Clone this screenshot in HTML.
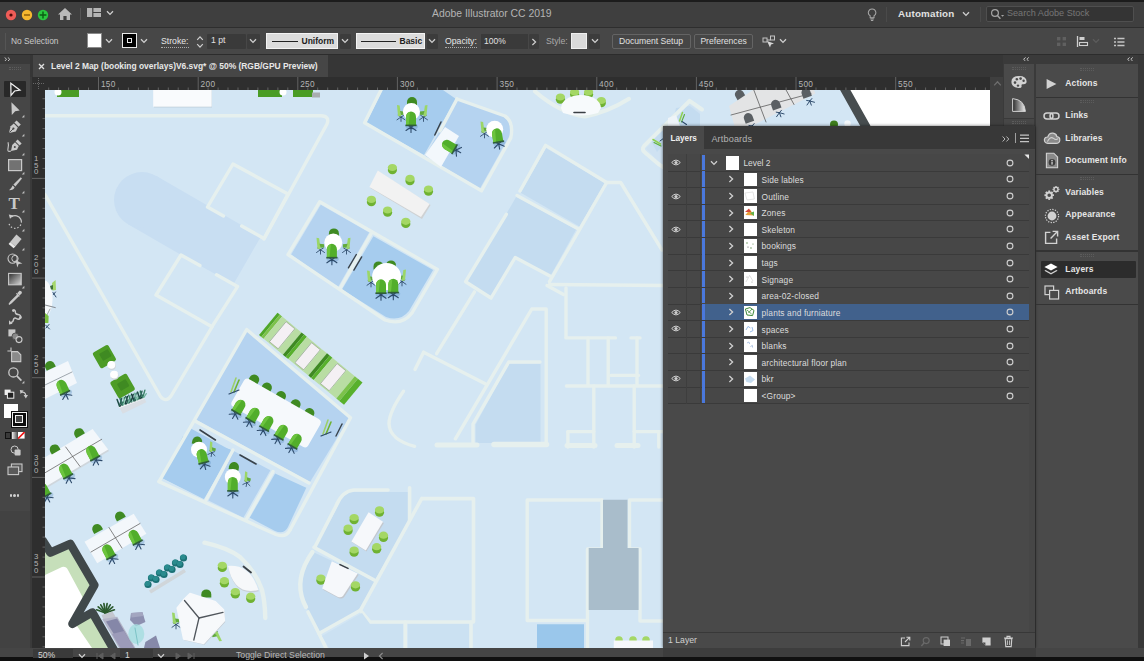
<!DOCTYPE html>
<html><head><meta charset="utf-8"><title>Adobe Illustrator CC 2019</title>
<style>
*{box-sizing:border-box;margin:0;padding:0}
html,body{width:1144px;height:661px;overflow:hidden;background:#3a3a3a;font-family:"Liberation Sans",sans-serif;font-size:8.5px;color:#dcdcdc;-webkit-font-smoothing:antialiased}
.abs{position:absolute}
#topline{left:0;top:0;width:1144px;height:2px;background:#1c1c1c}
#titlebar{left:0;top:2px;width:1144px;height:25px;background:#3f3f3f}
#ctrlbar{left:0;top:27px;width:1144px;height:28px;background:#474747;border-top:1px solid #2e2e2e;border-bottom:1px solid #2c2c2c}
#tabrow{left:0;top:55px;width:1144px;height:22px;background:#363636}
#tab{left:33px;top:55px;width:295px;height:22px;background:#464646}
#toolhdr{left:0;top:55px;width:30px;height:9px;background:#3a3a3a}
#tools{left:0;top:64px;width:30px;height:584px;background:linear-gradient(#464646 0,#464646 447px,#424242 447px)}
#hruler{left:32px;top:77px;width:958px;height:13px;background:#2e2e2e}
#vruler{left:32px;top:90px;width:13px;height:558px;background:#2e2e2e}
#canvas{left:45px;top:90px;width:945px;height:558px;background:#d4e7f4;overflow:hidden}
#vscroll{left:990px;top:77px;width:13px;height:571px;background:#3f3f3f}
#status{left:0;top:648px;width:1144px;height:9px;background:#454545}
#botline{left:0;top:657px;width:1144px;height:4px;background:#101010}
#dockbg{left:1003px;top:55px;width:141px;height:593px;background:#3a3a3a}
#iconcol{left:1004px;top:64px;width:30px;height:54px;background:#4a4a4a}
#iconcol2{left:1004px;top:119px;width:30px;height:529px;background:#474747}
#panelcol{left:1036px;top:64px;width:102px;height:593px;background:#4a4a4a}
#layers{left:663px;top:126px;width:372px;height:522px;background:#494949;box-shadow:0 0 3px rgba(0,0,0,.6)}
.t{position:absolute;white-space:nowrap;line-height:1}
</style></head><body>
<div class="abs" id="topline"></div>
<div class="abs" id="titlebar"></div>
<div class="abs" id="ctrlbar"></div>
<div class="abs" id="tabrow"></div>
<div class="abs" id="tab"></div>
<div class="abs" id="toolhdr"></div>
<div class="abs" id="tools"></div>
<div class="abs" id="hruler"></div>
<div class="abs" id="vruler"></div>
<div class="abs" id="canvas"><svg width="945" height="558" viewBox="45 90 945 558" style="position:absolute;left:0;top:0"><defs>
<g id="st"><ellipse cx="0" cy="1.6" rx="4.6" ry="4.2" fill="#6fb232"/><ellipse cx="0" cy="-1" rx="4.6" ry="3.6" fill="#a4d765"/></g>
<g id="legs" stroke="#2d4a6a" stroke-width="1.1" stroke-linecap="round"><path d="M0 0L0 5.5M0 0L-5 3.5M0 0L5 3.5M0 0L-3.5 -2M0 0L3.5 -2"/></g>
<g id="ch"><ellipse cx="0.8" cy="7.6" rx="6.2" ry="3.4" fill="#5f8fc4" opacity=".35"/><use href="#legs" transform="translate(0 8)"/><path d="M-5 6.5V-2A5 5.5 0 0 1 5 -2V6.5Z" fill="#52ae2b"/><path d="M-5 6.5V-2A5 5.5 0 0 1 -1 -7L-2.4 6.5Z" fill="#6cc43e"/><rect x="-5.6" y="5.6" width="11.2" height="1.6" fill="#2f5d3a"/></g>
<g id="dc"><path d="M-5 3V0A5 5 0 0 1 5 0V3Z" fill="#3f8a22"/></g>
<g id="sc"><use href="#legs" transform="translate(2 6) scale(.8)"/><path d="M-2 -6L0.6 -5.4L2.2 5.6L-1 5Z" fill="#9bd667"/><path d="M1 0L5.6 0.6L5.6 3.8L2 4Z" fill="#62ab3c"/></g>
<g id="gc"><path d="M-4.5 4V-1A4.5 4.5 0 0 1 4.5 -1V4Z" fill="#5a5f63"/></g></defs>
<rect x="45" y="90" width="945" height="558" fill="#d3e6f4"/>
<polygon points="156.0,175.8 261.0,236.4 233.0,284.9 128.0,224.2" fill="#c8def2" />
<circle cx="142.0" cy="200.0" r="28.0" fill="#c8def2" />
<polygon points="181.0,255.0 237.5,286.6 212.0,326.7 156.0,295.0" fill="#d3e6f4" />
<path d="M45 115.8H321Q330 116 327 124L264 239" fill="none" stroke="#e6f0ee" stroke-width="3.4" stroke-linecap="round" stroke-linejoin="round" />
<polyline points="241.7,226.0 264.0,238.5 288.0,194.0 233.0,164.0 207.5,207.0 223.5,216.0" fill="none" stroke="#e6f0ee" stroke-width="3.4" stroke-linejoin="round" stroke-linecap="round" />
<polygon points="223.5,216.0 207.5,207.0" fill="none" />
<polyline points="216.5,274.8 237.5,286.6 212.0,326.7 156.0,295.0 181.0,255.0 199.9,265.6" fill="none" stroke="#e6f0ee" stroke-width="3.4" stroke-linejoin="round" stroke-linecap="round" />
<path d="M45 194.5L160.5 396.5Q166 403 171 396L212 327" fill="none" stroke="#e6f0ee" stroke-width="3.4" stroke-linecap="round" stroke-linejoin="round" />
<rect x="154.0" y="89.4" width="58.0" height="18.0" rx="0.0" fill="#bccbd8" transform="rotate(0.0 183.0 98.4)" />
<rect x="153.2" y="88.1" width="58.5" height="18.6" rx="0.0" fill="#f9fbfd" transform="rotate(0.0 182.5 97.4)" />
<rect x="57.0" y="89.0" width="22.0" height="8.0" rx="0.0" fill="#4a9c25" transform="rotate(0.0 68.0 93.0)" />
<circle cx="58.0" cy="92.0" r="3.5" fill="#fff" />
<rect x="258.0" y="89.0" width="24.0" height="8.0" rx="0.0" fill="#4a9c25" transform="rotate(0.0 270.0 93.0)" />
<circle cx="283.0" cy="92.0" r="3.5" fill="#fff" />
<rect x="293.0" y="89.0" width="20.0" height="8.0" rx="0.0" fill="#4a9c25" transform="rotate(0.0 303.0 93.0)" />
<rect x="312.0" y="92.5" width="8.0" height="5.0" rx="0.0" fill="#a9adb0" transform="rotate(0.0 316.0 95.0)" />
<polygon points="383.4,88.0 366.6,122.8 424.0,155.0 456.0,99.0 440.0,88.0" fill="#a6ccee" />
<polygon points="458.0,100.0 503.0,116.0 510.0,123.0 510.0,135.0 480.0,188.6 425.0,156.0" fill="#b5d3f0" />
<path d="M382 88L364.6 122.8L481.5 190.8L510.8 138Q514 122 505 116L457 99" fill="none" stroke="#e6f0ee" stroke-width="3.4" stroke-linecap="round" stroke-linejoin="round" />
<polyline points="457.0,99.0 440.0,131.0" fill="none" stroke="#e6f0ee" stroke-width="3.4" stroke-linejoin="round" stroke-linecap="round" />
<polygon points="445.0,127.0 459.0,136.0 441.0,167.0 425.0,155.0" fill="#f3f8fc" />
<use href="#ch" transform="translate(449.0 146.0) rotate(-60.0) scale(1.00)"/>
<use href="#dc" transform="translate(412.0 102.0) rotate(0.0) scale(1.00)"/>
<use href="#sc" transform="translate(399.0 111.0) rotate(0.0) scale(1.00)"/>
<use href="#sc" transform="translate(425.5 111.0) rotate(0.0) scale(-1.00 1.00)"/>
<circle cx="411.4" cy="111.6" r="8.5" fill="#fff" />
<use href="#ch" transform="translate(411.0 119.0) rotate(0.0) scale(1.00)"/>
<use href="#sc" transform="translate(482.5 127.5) rotate(0.0) scale(1.00)"/>
<circle cx="494.7" cy="129.3" r="8.5" fill="#fff" />
<use href="#ch" transform="translate(497.3 135.8) rotate(-10.0) scale(1.00)"/>
<polyline points="441.0,122.0 434.8,135.0" fill="none" stroke="#39424a" stroke-width="1.5" stroke-linejoin="round" stroke-linecap="round" />
<use href="#st" transform="translate(392.4 168.5) rotate(0.0) scale(1.00)"/>
<use href="#st" transform="translate(410.0 179.4) rotate(0.0) scale(1.00)"/>
<use href="#st" transform="translate(428.5 190.0) rotate(0.0) scale(1.00)"/>
<polygon points="378.8,171.4 430.6,205.0 422.0,219.0 370.4,188.0" fill="#cfd2d4" />
<polygon points="377.8,170.4 429.6,204.0 421.0,217.0 369.4,187.0" fill="#f2f2f2" />
<use href="#st" transform="translate(371.4 200.4) rotate(0.0) scale(1.00)"/>
<use href="#st" transform="translate(387.6 211.0) rotate(0.0) scale(1.00)"/>
<use href="#st" transform="translate(405.8 222.3) rotate(0.0) scale(1.00)"/>
<polygon points="320.8,204.8 369.2,232.4 337.8,287.5 291.2,254.6" fill="#b5d3f0" />
<path d="M373.4 236.2L433.1 270.1L409 311Q400 322 386 317L342 289.6Z" fill="#a6ccee" stroke="none" stroke-width="3.4" stroke-linecap="round" stroke-linejoin="round" />
<path d="M288 254.6L319.8 201.7L437.4 269.4L412 313Q402 326 385 320L288 254.6" fill="none" stroke="#e6f0ee" stroke-width="3.4" stroke-linecap="round" stroke-linejoin="round" />
<polyline points="371.0,234.0 340.0,288.5" fill="none" stroke="#e6f0ee" stroke-width="3.4" stroke-linejoin="round" stroke-linecap="round" />
<polyline points="356.3,254.5 348.4,267.8" fill="none" stroke="#39424a" stroke-width="1.4" stroke-linejoin="round" stroke-linecap="round" />
<polyline points="361.7,256.9 353.9,270.2" fill="none" stroke="#39424a" stroke-width="1.4" stroke-linejoin="round" stroke-linecap="round" />
<use href="#dc" transform="translate(333.9 233.4) rotate(0.0) scale(1.00)"/>
<use href="#sc" transform="translate(318.5 243.7) rotate(0.0) scale(1.00)"/>
<use href="#sc" transform="translate(348.5 243.7) rotate(0.0) scale(-1.00 1.00)"/>
<circle cx="333.3" cy="242.6" r="9.0" fill="#fff" />
<use href="#ch" transform="translate(331.9 251.3) rotate(0.0) scale(1.00)"/>
<use href="#dc" transform="translate(378.5 266.4) rotate(0.0) scale(1.00)"/>
<use href="#dc" transform="translate(391.0 265.4) rotate(0.0) scale(1.00)"/>
<use href="#sc" transform="translate(369.0 276.5) rotate(0.0) scale(1.00)"/>
<use href="#sc" transform="translate(404.0 275.5) rotate(0.0) scale(-1.00 1.00)"/>
<ellipse cx="386.6" cy="276.6" rx="14.5" ry="13.5" fill="#fff" transform="rotate(0.0 386.6 276.6)" />
<use href="#ch" transform="translate(381.0 286.8) rotate(0.0) scale(1.00)"/>
<use href="#ch" transform="translate(393.3 286.2) rotate(0.0) scale(1.00)"/>
<polygon points="546.0,148.0 604.7,183.0 579.5,226.5 520.7,192.8" fill="#c4dcf0" />
<polygon points="516.4,196.5 576.2,229.6 550.8,275.3 515.2,257.5 491.0,297.0 466.9,281.7" fill="#c4dcf0" />
<polyline points="520.0,191.0 545.6,145.4 606.7,182.5 549.5,281.7" fill="none" stroke="#e6f0ee" stroke-width="3.4" stroke-linejoin="round" stroke-linecap="round" />
<polyline points="517.0,195.5 578.5,229.0" fill="none" stroke="#e6f0ee" stroke-width="3.4" stroke-linejoin="round" stroke-linecap="round" />
<polyline points="606.7,182.5 620.7,182.5 662.0,250.0" fill="none" stroke="#e6f0ee" stroke-width="3.4" stroke-linejoin="round" stroke-linecap="round" />
<polyline points="549.5,284.5 665.0,285.5" fill="none" stroke="#e6f0ee" stroke-width="3.4" stroke-linejoin="round" stroke-linecap="round" />
<polyline points="547.0,285.5 563.5,294.4" fill="none" stroke="#e6f0ee" stroke-width="3.4" stroke-linejoin="round" stroke-linecap="round" />
<polyline points="566.0,288.0 566.0,337.0" fill="none" stroke="#e6f0ee" stroke-width="3.4" stroke-linejoin="round" stroke-linecap="round" />
<polyline points="506.3,214.3 465.6,281.7 491.0,298.0 515.2,257.5 550.0,276.0" fill="none" stroke="#e6f0ee" stroke-width="3.4" stroke-linejoin="round" stroke-linecap="round" />
<polyline points="474.5,291.9 436.6,353.7" fill="none" stroke="#e6f0ee" stroke-width="3.4" stroke-linejoin="round" stroke-linecap="round" />
<polyline points="566.0,337.9 615.5,337.9" fill="none" stroke="#e6f0ee" stroke-width="3.4" stroke-linejoin="round" stroke-linecap="round" />
<polyline points="631.0,337.9 640.0,337.9" fill="none" stroke="#e6f0ee" stroke-width="3.4" stroke-linejoin="round" stroke-linecap="round" />
<polyline points="588.0,337.9 588.0,385.5" fill="none" stroke="#e6f0ee" stroke-width="3.4" stroke-linejoin="round" stroke-linecap="round" />
<polyline points="608.2,337.9 608.2,385.5" fill="none" stroke="#e6f0ee" stroke-width="3.4" stroke-linejoin="round" stroke-linecap="round" />
<polyline points="637.0,337.9 637.0,385.5" fill="none" stroke="#e6f0ee" stroke-width="3.4" stroke-linejoin="round" stroke-linecap="round" />
<polyline points="611.0,375.4 638.5,375.4" fill="none" stroke="#e6f0ee" stroke-width="3.4" stroke-linejoin="round" stroke-linecap="round" />
<polyline points="566.4,386.0 665.0,386.0" fill="none" stroke="#e6f0ee" stroke-width="3.4" stroke-linejoin="round" stroke-linecap="round" />
<polyline points="593.8,386.0 593.8,447.0" fill="none" stroke="#e6f0ee" stroke-width="3.4" stroke-linejoin="round" stroke-linecap="round" />
<polyline points="634.2,386.0 634.2,447.0" fill="none" stroke="#e6f0ee" stroke-width="3.4" stroke-linejoin="round" stroke-linecap="round" />
<polyline points="567.9,431.6 593.8,431.6" fill="none" stroke="#e6f0ee" stroke-width="3.4" stroke-linejoin="round" stroke-linecap="round" />
<polyline points="634.2,431.6 665.0,431.6" fill="none" stroke="#e6f0ee" stroke-width="3.4" stroke-linejoin="round" stroke-linecap="round" />
<polyline points="567.9,431.6 567.9,447.0" fill="none" stroke="#e6f0ee" stroke-width="3.4" stroke-linejoin="round" stroke-linecap="round" />
<polygon points="508.7,363.8 540.5,363.8 540.5,443.0 475.6,443.0 475.6,424.4" fill="#c4dcf0" />
<polyline points="455.4,438.8 531.8,309.0 546.2,309.0 546.2,445.0" fill="none" stroke="#e6f0ee" stroke-width="3.4" stroke-linejoin="round" stroke-linecap="round" />
<polyline points="540.0,362.0 508.7,362.0 473.0,424.0 473.0,443.0" fill="none" stroke="#e6f0ee" stroke-width="3.4" stroke-linejoin="round" stroke-linecap="round" />
<polyline points="494.0,444.5 546.5,444.5" fill="none" stroke="#e6f0ee" stroke-width="5.5" stroke-linejoin="round" stroke-linecap="round" />
<polyline points="437.0,445.0 477.0,445.0" fill="none" stroke="#e6f0ee" stroke-width="5.0" stroke-linejoin="round" stroke-linecap="round" />
<polyline points="567.0,445.5 595.0,445.5" fill="none" stroke="#e6f0ee" stroke-width="5.0" stroke-linejoin="round" stroke-linecap="round" />
<polyline points="617.0,445.5 638.0,445.5" fill="none" stroke="#e6f0ee" stroke-width="5.0" stroke-linejoin="round" stroke-linecap="round" />
<polyline points="658.8,431.6 658.8,447.0" fill="none" stroke="#e6f0ee" stroke-width="3.4" stroke-linejoin="round" stroke-linecap="round" />
<polyline points="423.6,352.3 485.7,384.0" fill="none" stroke="#e6f0ee" stroke-width="3.4" stroke-linejoin="round" stroke-linecap="round" />
<polyline points="423.6,352.3 415.0,369.6" fill="none" stroke="#e6f0ee" stroke-width="3.4" stroke-linejoin="round" stroke-linecap="round" />
<path d="M403.5 391.2Q389 412 389 424Q390 440 414.6 446.3" fill="none" stroke="#e6f0ee" stroke-width="3.4" stroke-linecap="round" stroke-linejoin="round" />
<path d="M535 91.4Q560 113 585 116.5Q608 112 629 98.8" fill="none" stroke="#e6f0ee" stroke-width="4.0" stroke-linecap="round" stroke-linejoin="round" />
<use href="#st" transform="translate(560.4 98.0) rotate(0.0) scale(1.00)"/>
<use href="#st" transform="translate(574.6 93.0) rotate(0.0) scale(1.00)"/>
<use href="#st" transform="translate(588.6 93.0) rotate(0.0) scale(1.00)"/>
<use href="#st" transform="translate(601.3 101.5) rotate(0.0) scale(1.00)"/>
<path d="M561 108A20 13 0 0 1 601 108L598 113Q580 118 563 113Z" fill="#f7fafc" stroke="none" stroke-width="3.4" stroke-linecap="round" stroke-linejoin="round" />
<polyline points="574.0,112.5 585.0,112.5" fill="none" stroke="#3a3f44" stroke-width="1.6" stroke-linejoin="round" stroke-linecap="round" />
<polygon points="689.6,104.0 646.0,148.5 659.0,162.0 700.0,192.0 700.0,112.0" fill="#cfe2f2" />
<polygon points="676.0,108.0 690.0,106.0 700.0,114.0 700.0,126.0 672.0,126.0" fill="#c4dcf0" />
<polygon points="650.0,139.0 662.0,130.0 668.0,140.0 657.0,152.0" fill="#c4dcf0" />
<path d="M702 109.5L689.6 100.9L644.5 145.5Q641 149.5 645 152.5L659 164.4L700 192" fill="none" stroke="#e6f0ee" stroke-width="4.0" stroke-linecap="round" stroke-linejoin="round" />
<polygon points="668.0,118.0 676.0,115.0 680.0,126.0 668.0,126.0" fill="#eef4f8" />
<polyline points="679.5,121.0 682.5,112.5" fill="none" stroke="#8fd14f" stroke-width="1.5" stroke-linejoin="round" stroke-linecap="round" />
<polyline points="681.5,122.0 684.5,114.5" fill="none" stroke="#5cae3c" stroke-width="1.1" stroke-linejoin="round" stroke-linecap="round" />
<polyline points="682.0,121.5 686.5,124.5" fill="none" stroke="#2d4a6a" stroke-width="1.1" stroke-linejoin="round" stroke-linecap="round" />
<polyline points="653.0,139.5 660.5,144.0" fill="none" stroke="#8fd14f" stroke-width="1.5" stroke-linejoin="round" stroke-linecap="round" />
<polyline points="654.0,142.5 661.0,146.0" fill="none" stroke="#5cae3c" stroke-width="1.1" stroke-linejoin="round" stroke-linecap="round" />
<polyline points="660.0,141.0 664.0,138.0" fill="none" stroke="#2d4a6a" stroke-width="1.0" stroke-linejoin="round" stroke-linecap="round" />
<polygon points="845.0,88.0 992.0,88.0 992.0,128.0 868.0,128.0" fill="#ffffff" />
<use href="#gc" transform="translate(739.9 95.2) rotate(-30.0) scale(1.00)"/>
<polygon points="729.0,106.0 756.0,88.0 813.0,88.0 815.5,93.5 748.0,128.0 735.0,128.0" fill="#e3e4e5" />
<polyline points="753.8,90.0 766.0,122.0" fill="none" stroke="#4a4a4a" stroke-width="0.7" stroke-linejoin="round" stroke-linecap="round" />
<polyline points="785.0,88.0 794.0,104.5" fill="none" stroke="#4a4a4a" stroke-width="0.7" stroke-linejoin="round" stroke-linecap="round" />
<polyline points="731.0,115.0 811.0,93.5" fill="none" stroke="#4a4a4a" stroke-width="0.7" stroke-linejoin="round" stroke-linecap="round" />
<use href="#legs" transform="translate(779.4 112.7) rotate(-20.0) scale(0.80)"/>
<use href="#gc" transform="translate(775.9 105.2) rotate(-20.0) scale(1.00)"/>
<use href="#legs" transform="translate(752.1 126.0) rotate(-20.0) scale(0.80)"/>
<use href="#gc" transform="translate(748.6 118.5) rotate(-20.0) scale(1.00)"/>
<use href="#legs" transform="translate(809.8 101.0) rotate(-20.0) scale(0.80)"/>
<use href="#gc" transform="translate(806.3 93.5) rotate(-20.0) scale(1.00)"/>
<circle cx="847.5" cy="123.5" r="3.2" fill="#f4f8fa" />
<polyline points="843.0,86.0 866.0,127.0" fill="none" stroke="#474d4f" stroke-width="9.0" stroke-linejoin="round" stroke-linecap="round" />
<circle cx="834.0" cy="124.5" r="4.0" fill="#3f7d1d" />
<polygon points="277.5,312.7 279.8,314.6 261.3,336.9 259.0,335.0" fill="#4fa728" />
<polygon points="279.8,314.6 282.1,316.5 263.6,338.8 261.3,336.9" fill="#7cc24a" />
<polygon points="282.1,316.5 286.8,320.3 268.3,342.6 263.6,338.8" fill="#b9dda3" />
<polygon points="286.8,320.3 296.0,327.9 277.5,350.3 268.3,342.6" fill="#b9dda3" />
<polygon points="286.1,321.7 294.8,328.8 278.2,348.8 269.5,341.7" fill="#f4f0f4" stroke="#7d8a78" stroke-width=".5" stroke-linejoin="round"/>
<polygon points="296.0,327.9 301.5,332.4 282.9,354.7 277.5,350.3" fill="#b9dda3" />
<polygon points="301.5,332.4 304.2,334.6 285.6,356.9 282.9,354.7" fill="#3f8a22" />
<polygon points="304.2,334.6 306.9,336.8 288.3,359.1 285.6,356.9" fill="#58b02c" />
<polygon points="306.9,336.8 312.3,341.3 293.8,363.6 288.3,359.1" fill="#b9dda3" />
<polygon points="312.3,341.3 321.5,348.9 303.0,371.2 293.8,363.6" fill="#b9dda3" />
<polygon points="311.6,342.7 320.3,349.8 303.7,369.8 295.0,362.7" fill="#f4f0f4" stroke="#7d8a78" stroke-width=".5" stroke-linejoin="round"/>
<polygon points="321.5,348.9 327.0,353.3 308.4,375.6 303.0,371.2" fill="#b9dda3" />
<polygon points="327.0,353.3 329.7,355.5 311.1,377.9 308.4,375.6" fill="#3f8a22" />
<polygon points="329.7,355.5 332.4,357.8 313.8,380.1 311.1,377.9" fill="#58b02c" />
<polygon points="332.4,357.8 337.8,362.2 319.3,384.5 313.8,380.1" fill="#b9dda3" />
<polygon points="337.8,362.2 347.0,369.8 328.5,392.1 319.3,384.5" fill="#b9dda3" />
<polygon points="337.1,363.6 345.8,370.7 329.2,390.7 320.5,383.6" fill="#f4f0f4" stroke="#7d8a78" stroke-width=".5" stroke-linejoin="round"/>
<polygon points="347.0,369.8 354.8,376.2 336.3,398.5 328.5,392.1" fill="#b9dda3" />
<polygon points="354.8,376.2 357.9,378.7 339.3,401.0 336.3,398.5" fill="#7cc24a" />
<polygon points="357.9,378.7 362.5,382.5 344.0,404.8 339.3,401.0" fill="#58b02c" />
<polygon points="246.7,329.7 349.5,417.6 310.0,482.0 195.0,419.0" fill="#b5d3f0" />
<polygon points="183.0,436.0 230.7,449.5 203.6,498.8 162.3,478.0" fill="#a6ccee" />
<polygon points="190.0,428.0 232.0,451.0 204.0,499.0 162.3,478.0" fill="#a6ccee" />
<polygon points="233.8,451.0 270.4,470.2 243.4,517.8 208.4,500.4" fill="#b5d3f0" />
<path d="M275.1 473.4L306.3 487.7L288 527Q284 535 275 531L249.7 517.8Z" fill="#a6ccee" stroke="none" stroke-width="3.4" stroke-linecap="round" stroke-linejoin="round" />
<polyline points="159.0,481.6 246.7,329.5 350.5,417.8 290.0,530.0" fill="none" stroke="#e6f0ee" stroke-width="3.4" stroke-linejoin="round" stroke-linecap="round" />
<path d="M159 481.6L276 534.5Q286 538 290 530" fill="none" stroke="#e6f0ee" stroke-width="3.4" stroke-linecap="round" stroke-linejoin="round" />
<polyline points="195.0,421.0 309.0,483.0" fill="none" stroke="#e6f0ee" stroke-width="3.4" stroke-linejoin="round" stroke-linecap="round" />
<polyline points="233.0,450.0 206.0,500.0" fill="none" stroke="#e6f0ee" stroke-width="3.4" stroke-linejoin="round" stroke-linecap="round" />
<polyline points="273.0,471.5 246.5,519.0" fill="none" stroke="#e6f0ee" stroke-width="3.4" stroke-linejoin="round" stroke-linecap="round" />
<use href="#dc" transform="translate(254.2 379.6) rotate(30.0) scale(1.00)"/>
<use href="#dc" transform="translate(266.9 387.6) rotate(30.0) scale(1.00)"/>
<use href="#dc" transform="translate(281.0 396.0) rotate(30.0) scale(1.00)"/>
<use href="#dc" transform="translate(295.6 404.3) rotate(30.0) scale(1.00)"/>
<use href="#dc" transform="translate(309.4 413.1) rotate(30.0) scale(1.00)"/>
<rect x="232.1" y="397.0" width="88.0" height="32.0" rx="4.0" fill="#f6f9fc" transform="rotate(29.7 276.1 413.0)" />
<use href="#ch" transform="translate(239.3 406.8) rotate(30.0) scale(1.00)"/>
<use href="#ch" transform="translate(253.5 414.8) rotate(30.0) scale(1.00)"/>
<use href="#ch" transform="translate(267.3 423.1) rotate(30.0) scale(1.00)"/>
<use href="#ch" transform="translate(281.8 431.9) rotate(30.0) scale(1.00)"/>
<use href="#ch" transform="translate(295.6 440.9) rotate(30.0) scale(1.00)"/>
<polyline points="231.0,392.0 236.0,378.0" fill="none" stroke="#9ccf6a" stroke-width="1.6" stroke-linejoin="round" stroke-linecap="round" />
<polyline points="234.0,392.0 239.0,380.0" fill="none" stroke="#6fb232" stroke-width="1.6" stroke-linejoin="round" stroke-linecap="round" />
<polyline points="229.0,394.0 239.0,390.0" fill="none" stroke="#2d4a6a" stroke-width="1.2" stroke-linejoin="round" stroke-linecap="round" />
<polyline points="323.0,434.0 328.0,420.0" fill="none" stroke="#9ccf6a" stroke-width="1.6" stroke-linejoin="round" stroke-linecap="round" />
<polyline points="326.0,434.0 331.0,422.0" fill="none" stroke="#6fb232" stroke-width="1.6" stroke-linejoin="round" stroke-linecap="round" />
<polyline points="321.0,436.0 331.0,432.0" fill="none" stroke="#2d4a6a" stroke-width="1.2" stroke-linejoin="round" stroke-linecap="round" />
<polyline points="336.0,436.0 342.0,424.0" fill="none" stroke="#39424a" stroke-width="1.4" stroke-linejoin="round" stroke-linecap="round" />
<polyline points="200.0,430.0 215.4,440.0" fill="none" stroke="#39424a" stroke-width="1.6" stroke-linejoin="round" stroke-linecap="round" />
<polyline points="240.0,455.0 256.0,464.0" fill="none" stroke="#39424a" stroke-width="1.6" stroke-linejoin="round" stroke-linecap="round" />
<use href="#dc" transform="translate(197.2 441.5) rotate(10.0) scale(1.00)"/>
<use href="#sc" transform="translate(211.0 447.0) rotate(10.0) scale(0.90)"/>
<circle cx="199.0" cy="449.7" r="8.0" fill="#fff" />
<use href="#ch" transform="translate(202.2 456.5) rotate(-15.0) scale(1.00)"/>
<use href="#dc" transform="translate(234.0 467.0) rotate(10.0) scale(1.00)"/>
<use href="#sc" transform="translate(246.0 477.0) rotate(10.0) scale(0.90)"/>
<circle cx="232.8" cy="477.0" r="8.0" fill="#fff" />
<use href="#ch" transform="translate(232.8 484.5) rotate(0.0) scale(1.00)"/>
<rect x="95.4" y="347.6" width="18.0" height="18.0" rx="2.0" fill="#4d9c26" transform="rotate(-30.0 104.4 356.6)" />
<rect x="100.4" y="351.0" width="10.0" height="8.0" rx="1.0" fill="#3f8a22" transform="rotate(-30.0 105.4 355.0)" />
<circle cx="111.4" cy="365.0" r="4.0" fill="#fff" />
<circle cx="114.2" cy="374.8" r="4.0" fill="#fff" />
<rect x="113.1" y="376.5" width="19.0" height="19.0" rx="2.0" fill="#4d9c26" transform="rotate(-30.0 122.6 386.0)" />
<rect x="118.2" y="381.0" width="10.0" height="8.0" rx="1.0" fill="#3f8a22" transform="rotate(-30.0 123.2 385.0)" />
<polygon points="118.5,406.0 143.9,396.9 146.3,402.3 122.7,413.8" fill="#d9dee4" />
<polygon points="118.5,406.0 143.9,396.9 144.7,398.7 119.4,407.9" fill="#f1f3f6" />
<polyline points="119.5,406.0 117.1,399.5" fill="none" stroke="#1d4a45" stroke-width="1.5" stroke-linejoin="round" stroke-linecap="round" />
<polyline points="119.5,406.0 121.7,398.5" fill="none" stroke="#255c4c" stroke-width="1.4" stroke-linejoin="round" stroke-linecap="round" />
<polyline points="120.5,406.0 123.1,402.0" fill="none" stroke="#173c3a" stroke-width="1.2" stroke-linejoin="round" stroke-linecap="round" />
<polyline points="122.4,404.9 120.0,398.4" fill="none" stroke="#2f6f5f" stroke-width="1.5" stroke-linejoin="round" stroke-linecap="round" />
<polyline points="122.4,404.9 124.6,397.4" fill="none" stroke="#3b8268" stroke-width="1.4" stroke-linejoin="round" stroke-linecap="round" />
<polyline points="123.4,404.9 126.0,400.9" fill="none" stroke="#6fb39c" stroke-width="1.2" stroke-linejoin="round" stroke-linecap="round" />
<polyline points="125.3,403.9 122.9,397.4" fill="none" stroke="#8fc9b4" stroke-width="1.5" stroke-linejoin="round" stroke-linecap="round" />
<polyline points="125.3,403.9 127.5,396.4" fill="none" stroke="#173c3a" stroke-width="1.4" stroke-linejoin="round" stroke-linecap="round" />
<polyline points="126.3,403.9 128.9,399.9" fill="none" stroke="#1d4a45" stroke-width="1.2" stroke-linejoin="round" stroke-linecap="round" />
<polyline points="128.2,402.9 125.8,396.4" fill="none" stroke="#255c4c" stroke-width="1.5" stroke-linejoin="round" stroke-linecap="round" />
<polyline points="128.2,402.9 130.4,395.4" fill="none" stroke="#6fb39c" stroke-width="1.4" stroke-linejoin="round" stroke-linecap="round" />
<polyline points="129.2,402.9 131.8,398.9" fill="none" stroke="#2f6f5f" stroke-width="1.2" stroke-linejoin="round" stroke-linecap="round" />
<polyline points="131.1,401.8 128.7,395.3" fill="none" stroke="#3b8268" stroke-width="1.5" stroke-linejoin="round" stroke-linecap="round" />
<polyline points="131.1,401.8 133.3,394.3" fill="none" stroke="#1d4a45" stroke-width="1.4" stroke-linejoin="round" stroke-linecap="round" />
<polyline points="132.1,401.8 134.7,397.8" fill="none" stroke="#8fc9b4" stroke-width="1.2" stroke-linejoin="round" stroke-linecap="round" />
<polyline points="134.0,400.8 131.6,394.2" fill="none" stroke="#173c3a" stroke-width="1.5" stroke-linejoin="round" stroke-linecap="round" />
<polyline points="134.0,400.8 136.2,393.2" fill="none" stroke="#2f6f5f" stroke-width="1.4" stroke-linejoin="round" stroke-linecap="round" />
<polyline points="135.0,400.8 137.6,396.8" fill="none" stroke="#255c4c" stroke-width="1.2" stroke-linejoin="round" stroke-linecap="round" />
<polyline points="136.9,399.7 134.5,393.2" fill="none" stroke="#6fb39c" stroke-width="1.5" stroke-linejoin="round" stroke-linecap="round" />
<polyline points="136.9,399.7 139.1,392.2" fill="none" stroke="#8fc9b4" stroke-width="1.4" stroke-linejoin="round" stroke-linecap="round" />
<polyline points="137.9,399.7 140.5,395.7" fill="none" stroke="#3b8268" stroke-width="1.2" stroke-linejoin="round" stroke-linecap="round" />
<polyline points="139.8,398.6 137.4,392.1" fill="none" stroke="#1d4a45" stroke-width="1.5" stroke-linejoin="round" stroke-linecap="round" />
<polyline points="139.8,398.6 142.0,391.1" fill="none" stroke="#255c4c" stroke-width="1.4" stroke-linejoin="round" stroke-linecap="round" />
<polyline points="140.8,398.6 143.4,394.6" fill="none" stroke="#173c3a" stroke-width="1.2" stroke-linejoin="round" stroke-linecap="round" />
<polyline points="142.7,397.6 140.3,391.1" fill="none" stroke="#2f6f5f" stroke-width="1.5" stroke-linejoin="round" stroke-linecap="round" />
<polyline points="142.7,397.6 144.9,390.1" fill="none" stroke="#3b8268" stroke-width="1.4" stroke-linejoin="round" stroke-linecap="round" />
<polyline points="143.7,397.6 146.3,393.6" fill="none" stroke="#6fb39c" stroke-width="1.2" stroke-linejoin="round" stroke-linecap="round" />
<circle cx="111.9" cy="366.0" r="3.9" fill="#cfd5da" />
<circle cx="114.7" cy="375.8" r="3.9" fill="#cfd5da" />
<circle cx="111.4" cy="365.0" r="3.8" fill="#fff" />
<circle cx="114.2" cy="374.8" r="3.8" fill="#fff" />
<polygon points="45.0,372.0 68.0,361.0 77.0,383.0 45.0,399.0" fill="#f3f7fb" />
<polyline points="45.0,385.0 72.0,372.0" fill="none" stroke="#7a848c" stroke-width="0.7" stroke-linejoin="round" stroke-linecap="round" />
<use href="#dc" transform="translate(50.0 366.0) rotate(-25.0) scale(1.00)"/>
<use href="#ch" transform="translate(62.4 387.0) rotate(-25.0) scale(1.00)"/>
<ellipse cx="44.0" cy="299.0" rx="8.6" ry="18.5" fill="#f6f9fb" transform="rotate(0.0 44.0 299.0)" />
<polyline points="45.0,305.0 55.3,307.6" fill="none" stroke="#7a7f85" stroke-width="0.9" stroke-linejoin="round" stroke-linecap="round" />
<polyline points="50.0,309.0 47.0,315.0" fill="none" stroke="#8a8f95" stroke-width="0.8" stroke-linejoin="round" stroke-linecap="round" />
<polygon points="52.0,283.0 55.6,280.0 56.0,290.0 52.5,290.5" fill="#a5d76b" />
<polygon points="50.0,286.0 53.0,285.0 53.0,289.5 51.0,289.5" fill="#3f6f3a" />
<polyline points="53.0,292.5 56.0,297.0" fill="none" stroke="#2d4a6a" stroke-width="1.0" stroke-linejoin="round" stroke-linecap="round" />
<polyline points="55.5,292.0 53.5,294.5" fill="none" stroke="#2d4a6a" stroke-width="1.0" stroke-linejoin="round" stroke-linecap="round" />
<polygon points="45.0,313.0 48.6,316.0 48.4,323.0 45.0,323.0" fill="#7cc040" />
<polyline points="45.5,325.0 49.5,329.0" fill="none" stroke="#2d4a6a" stroke-width="1.0" stroke-linejoin="round" stroke-linecap="round" />
<polyline points="49.0,324.5 46.0,328.0" fill="none" stroke="#2d4a6a" stroke-width="1.0" stroke-linejoin="round" stroke-linecap="round" />
<polygon points="45.0,459.0 93.4,430.5 109.0,451.0 45.0,489.0" fill="#cfd6dc" />
<polygon points="45.0,457.3 92.7,429.0 108.2,449.6 45.0,487.0" fill="#f3f7fb" />
<polyline points="45.0,472.8 101.7,439.3" fill="none" stroke="#555" stroke-width="0.7" stroke-linejoin="round" stroke-linecap="round" />
<polyline points="65.7,447.0 79.9,466.3" fill="none" stroke="#555" stroke-width="0.7" stroke-linejoin="round" stroke-linecap="round" />
<use href="#dc" transform="translate(79.1 433.2) rotate(-30.0) scale(1.00)"/>
<use href="#dc" transform="translate(54.7 449.4) rotate(-30.0) scale(1.00)"/>
<use href="#ch" transform="translate(92.2 452.8) rotate(-28.0) scale(1.00)"/>
<use href="#ch" transform="translate(65.2 470.8) rotate(-28.0) scale(1.00)"/>
<use href="#ch" transform="translate(43.4 490.0) rotate(-28.0) scale(1.00)"/>
<polygon points="84.5,541.7 133.7,513.7 146.4,533.7 97.2,563.3" fill="#f3f7fb" />
<polyline points="91.0,552.0 140.0,523.5" fill="none" stroke="#555" stroke-width="0.7" stroke-linejoin="round" stroke-linecap="round" />
<polyline points="109.0,527.5 122.0,548.0" fill="none" stroke="#555" stroke-width="0.7" stroke-linejoin="round" stroke-linecap="round" />
<use href="#dc" transform="translate(97.2 529.0) rotate(-28.0) scale(1.00)"/>
<use href="#dc" transform="translate(120.0 516.5) rotate(-28.0) scale(1.00)"/>
<use href="#ch" transform="translate(134.7 537.0) rotate(-28.0) scale(1.00)"/>
<use href="#ch" transform="translate(108.3 551.5) rotate(-28.0) scale(1.00)"/>
<polygon points="45.0,548.0 52.0,556.0 70.0,548.0 90.0,585.0 70.0,622.0 90.0,614.0 110.0,648.0 45.0,648.0" fill="#c6dfba" />
<path d="M45 575L62 567Q66 566 68 570L82 596Q84 600 82 604L75 618Q74 622 77 626L92 648H45Z" fill="#ffffff" stroke="none" stroke-width="3.4" stroke-linecap="round" stroke-linejoin="round" />
<polyline points="43.0,541.0 50.3,552.6 70.3,543.8 94.4,585.1 72.4,623.9 92.3,612.4 114.0,650.0" fill="none" stroke="#40484a" stroke-width="8.4" stroke-linejoin="round" stroke-linecap="round" />
<polygon points="149.0,590.5 184.0,569.0 186.0,572.0 151.0,593.5" fill="#d0d6da" />
<circle cx="148.0" cy="584.5" r="3.6" fill="#1c7175" />
<circle cx="147.5" cy="583.5" r="2.6" fill="#2a8b8e" />
<circle cx="151.5" cy="578.0" r="3.6" fill="#1c7175" />
<circle cx="151.0" cy="577.0" r="2.6" fill="#2a8b8e" />
<circle cx="156.0" cy="579.5" r="3.6" fill="#1c7175" />
<circle cx="155.5" cy="578.5" r="2.6" fill="#2a8b8e" />
<circle cx="159.5" cy="573.0" r="3.6" fill="#1c7175" />
<circle cx="159.0" cy="572.0" r="2.6" fill="#2a8b8e" />
<circle cx="164.0" cy="574.5" r="3.6" fill="#1c7175" />
<circle cx="163.5" cy="573.5" r="2.6" fill="#2a8b8e" />
<circle cx="167.5" cy="568.0" r="3.6" fill="#1c7175" />
<circle cx="167.0" cy="567.0" r="2.6" fill="#2a8b8e" />
<circle cx="172.0" cy="569.5" r="3.6" fill="#1c7175" />
<circle cx="171.5" cy="568.5" r="2.6" fill="#2a8b8e" />
<circle cx="175.5" cy="563.0" r="3.6" fill="#1c7175" />
<circle cx="175.0" cy="562.0" r="2.6" fill="#2a8b8e" />
<circle cx="180.0" cy="564.5" r="3.6" fill="#1c7175" />
<circle cx="179.5" cy="563.5" r="2.6" fill="#2a8b8e" />
<circle cx="183.5" cy="558.0" r="3.6" fill="#1c7175" />
<circle cx="183.0" cy="557.0" r="2.6" fill="#2a8b8e" />
<polyline points="105.5,613.0 96.6,609.8" fill="none" stroke="#2c5a2e" stroke-width="1.7" stroke-linejoin="round" stroke-linecap="round" />
<polyline points="105.5,613.0 98.2,606.9" fill="none" stroke="#2c5a2e" stroke-width="1.7" stroke-linejoin="round" stroke-linecap="round" />
<polyline points="105.5,613.0 100.8,604.8" fill="none" stroke="#2c5a2e" stroke-width="1.7" stroke-linejoin="round" stroke-linecap="round" />
<polyline points="105.5,613.0 103.9,603.6" fill="none" stroke="#2c5a2e" stroke-width="1.7" stroke-linejoin="round" stroke-linecap="round" />
<polyline points="105.5,613.0 107.1,603.6" fill="none" stroke="#2c5a2e" stroke-width="1.7" stroke-linejoin="round" stroke-linecap="round" />
<polyline points="105.5,613.0 110.2,604.8" fill="none" stroke="#2c5a2e" stroke-width="1.7" stroke-linejoin="round" stroke-linecap="round" />
<polyline points="105.5,613.0 112.8,606.9" fill="none" stroke="#2c5a2e" stroke-width="1.7" stroke-linejoin="round" stroke-linecap="round" />
<polyline points="105.5,613.0 114.4,609.8" fill="none" stroke="#2c5a2e" stroke-width="1.7" stroke-linejoin="round" stroke-linecap="round" />
<polygon points="101.5,615.0 112.5,611.5 116.0,617.5 104.0,621.0" fill="#c4c7cf" />
<polygon points="102.3,619.0 117.2,616.8 135.4,648.0 119.0,648.0" fill="#b3b5c7" />
<polygon points="106.0,621.5 117.0,618.5 134.0,648.0 122.5,648.0" fill="#8587a8" />
<polygon points="112.0,634.0 124.0,631.0 134.0,648.0 120.5,648.0" fill="#9c9bb9" />
<polygon points="131.0,613.0 142.5,612.2 145.4,622.0 136.0,626.3 130.0,620.0" fill="#8d90b0" />
<polygon points="131.0,613.0 142.5,612.2 143.4,616.0 131.5,617.5" fill="#a3a6c0" />
<ellipse cx="136.3" cy="634.0" rx="8.0" ry="10.0" fill="#a4dcde" transform="rotate(0.0 136.3 634.0)" opacity=".78"/>
<polyline points="135.0,628.0 138.0,645.0" fill="none" stroke="#7cc3c6" stroke-width="1.0" stroke-linejoin="round" stroke-linecap="round" />
<polygon points="145.4,642.0 156.0,635.4 160.0,648.0 144.0,648.0" fill="#8689a9" />
<use href="#dc" transform="translate(206.3 594.4) rotate(0.0) scale(1.00)"/>
<use href="#sc" transform="translate(174.0 618.5) rotate(0.0) scale(1.00)"/>
<use href="#sc" transform="translate(218.0 636.0) rotate(160.0) scale(1.00)"/>
<path d="M183.6 599.9L190 593.5L215.4 601.7L223.5 609.9L224.4 620.7L203.6 643.4L183.6 638.9L177.2 608Z" fill="#c5ccd3" stroke="none" stroke-width="3.4" stroke-linecap="round" stroke-linejoin="round" transform="translate(0.8 1.4)"/>
<path d="M183.6 599.9L190 593.5L215.4 601.7L223.5 609.9L224.4 620.7L203.6 643.4L183.6 638.9L177.2 608Z" fill="#f7f9fb" stroke="#f7f9fb" stroke-width="1.5" stroke-linecap="round" stroke-linejoin="round" />
<polyline points="199.0,618.0 184.5,600.5" fill="none" stroke="#50565c" stroke-width="1.3" stroke-linejoin="round" stroke-linecap="round" />
<polyline points="199.0,618.0 223.0,612.4" fill="none" stroke="#50565c" stroke-width="1.3" stroke-linejoin="round" stroke-linecap="round" />
<polyline points="199.0,618.0 193.8,640.0" fill="none" stroke="#50565c" stroke-width="1.3" stroke-linejoin="round" stroke-linecap="round" />
<path d="M204.5 542.7Q228 548 240 557Q256 572 262 590Q265 602 265.3 618" fill="none" stroke="#e6f0ee" stroke-width="4.4" stroke-linecap="round" stroke-linejoin="round" />
<use href="#st" transform="translate(222.3 566.3) rotate(0.0) scale(1.00)"/>
<use href="#st" transform="translate(224.4 581.7) rotate(0.0) scale(1.00)"/>
<use href="#st" transform="translate(235.3 592.6) rotate(0.0) scale(1.00)"/>
<use href="#st" transform="translate(250.7 597.2) rotate(0.0) scale(1.00)"/>
<path d="M228 566Q250 564 258.5 590Q234 596 228 566Z" fill="#c9cfd6" stroke="none" stroke-width="3.4" stroke-linecap="round" stroke-linejoin="round" transform="translate(0.3 1.3)"/>
<path d="M228 566Q250 564 258.5 590Q234 596 228 566Z" fill="#f6f8fa" stroke="none" stroke-width="3.4" stroke-linecap="round" stroke-linejoin="round" />
<polyline points="243.5,566.5 251.0,572.5" fill="none" stroke="#3a3f44" stroke-width="1.8" stroke-linejoin="round" stroke-linecap="round" />
<path d="M348 492H409.4V521.8L375.4 579L315.4 547.7L337 508Q342 494 348 492Z" fill="#c4dcf0" stroke="none" stroke-width="3.4" stroke-linecap="round" stroke-linejoin="round" />
<path d="M313 552L375 581L360.4 609L318 633L305 604Q295 580 313 552Z" fill="#c4dcf0" stroke="none" stroke-width="3.4" stroke-linecap="round" stroke-linejoin="round" />
<path d="M388 490H354Q342 491 336 506L315.4 546" fill="none" stroke="#e6f0ee" stroke-width="3.6" stroke-linecap="round" stroke-linejoin="round" />
<polyline points="409.6,487.7 409.6,520.0" fill="none" stroke="#e6f0ee" stroke-width="3.6" stroke-linejoin="round" stroke-linecap="round" />
<polyline points="314.0,547.4 376.0,581.0" fill="none" stroke="#e6f0ee" stroke-width="3.6" stroke-linejoin="round" stroke-linecap="round" />
<path d="M312.5 552Q294 578 303.5 602L306 607" fill="none" stroke="#e6f0ee" stroke-width="4.4" stroke-linecap="round" stroke-linejoin="round" />
<polyline points="308.0,612.0 319.0,633.5 360.4,610.3" fill="none" stroke="#e6f0ee" stroke-width="3.6" stroke-linejoin="round" stroke-linecap="round" />
<polyline points="319.0,633.5 326.0,648.0" fill="none" stroke="#e6f0ee" stroke-width="3.6" stroke-linejoin="round" stroke-linecap="round" />
<polyline points="421.7,498.6 473.5,498.6 473.5,622.0 370.0,622.0 360.4,610.3 421.7,498.6" fill="none" stroke="#e6f0ee" stroke-width="3.6" stroke-linejoin="round" stroke-linecap="round" />
<polygon points="322.0,636.0 362.0,613.0 370.0,624.0 403.0,624.0 403.0,648.0 329.0,648.0" fill="#cbe1f2" />
<polygon points="408.0,624.0 470.0,624.0 470.0,648.0 408.0,648.0" fill="#cbe1f2" />
<polyline points="405.3,622.0 405.3,648.0" fill="none" stroke="#e6f0ee" stroke-width="3.6" stroke-linejoin="round" stroke-linecap="round" />
<polyline points="471.0,622.0 471.0,648.0" fill="none" stroke="#e6f0ee" stroke-width="3.6" stroke-linejoin="round" stroke-linecap="round" />
<use href="#st" transform="translate(379.5 510.9) rotate(0.0) scale(1.00)"/>
<use href="#st" transform="translate(354.1 518.5) rotate(0.0) scale(1.00)"/>
<use href="#st" transform="translate(348.1 529.1) rotate(0.0) scale(1.00)"/>
<polygon points="369.6,513.4 383.9,523.0 366.4,551.4 351.5,541.8" fill="#c3c8ce" />
<polygon points="368.6,512.2 383.0,521.8 365.8,550.4 351.4,541.4" fill="#f6f8fb" />
<use href="#st" transform="translate(383.5 536.2) rotate(0.0) scale(1.00)"/>
<use href="#st" transform="translate(376.7 547.7) rotate(0.0) scale(1.00)"/>
<use href="#st" transform="translate(354.1 551.0) rotate(0.0) scale(1.00)"/>
<use href="#st" transform="translate(320.9 579.0) rotate(0.0) scale(1.00)"/>
<path d="M331.8 561.3L357.7 573.5L343 596Q341 598 338 597L322.2 588.5Z" fill="#c3c8ce" stroke="none" stroke-width="3.4" stroke-linecap="round" stroke-linejoin="round" transform="translate(1 1.2)"/>
<path d="M331.8 561.3L357.7 573.5L343 596Q341 598 338 597L322.2 588.5Z" fill="#f6f8fb" stroke="none" stroke-width="3.4" stroke-linecap="round" stroke-linejoin="round" />
<polyline points="340.0,564.6 348.0,568.4" fill="none" stroke="#3a3f44" stroke-width="1.6" stroke-linejoin="round" stroke-linecap="round" />
<use href="#st" transform="translate(355.5 585.8) rotate(0.0) scale(1.00)"/>
<polyline points="602.0,500.0 527.2,500.0 527.2,620.5 587.5,620.5" fill="none" stroke="#e6f0ee" stroke-width="3.4" stroke-linejoin="round" stroke-linecap="round" />
<polyline points="665.0,500.0 629.5,500.0 629.5,549.0 640.0,549.0 640.0,621.0 665.0,621.0" fill="none" stroke="#e6f0ee" stroke-width="3.4" stroke-linejoin="round" stroke-linecap="round" />
<polyline points="602.0,500.0 602.0,549.0 587.5,549.0 587.5,648.0" fill="none" stroke="#e6f0ee" stroke-width="3.4" stroke-linejoin="round" stroke-linecap="round" />
<polygon points="603.0,499.7 627.5,499.7 627.5,548.0 638.6,548.0 638.6,610.0 588.7,610.0 588.7,548.0 603.0,548.0" fill="#a9bdcb" />
<polygon points="537.0,624.2 584.0,624.2 584.0,648.0 537.0,648.0" fill="#9ac7eb" />
<circle cx="619.0" cy="640.0" r="3.8" fill="#a4d765" />
<circle cx="633.0" cy="640.0" r="3.8" fill="#a4d765" />
<circle cx="646.0" cy="640.0" r="3.8" fill="#a4d765" />
<polygon points="613.8,640.5 653.0,640.5 653.0,648.0 613.8,648.0" fill="#f6f8fb" /></svg></div>
<div class="abs" id="vscroll"></div>
<div class="abs" id="dockbg"></div>
<div class="abs" id="iconcol"></div>
<div class="abs" id="iconcol2"></div>
<div class="abs" id="panelcol"></div>
<div class="abs" id="layers"><div class="abs" style="left:0.0px;top:0.0px;width:372.0px;height:23.0px;background:#383838;"></div>
<div class="abs" style="left:0.0px;top:0.0px;width:41.0px;height:23.5px;background:#494949;"></div>
<div class="t" style="left:7.5px;top:9.2px;font-size:8.20px;color:#f0f0f0;font-weight:700;">Layers</div>
<div class="t" style="left:48.4px;top:8.5px;font-size:9.10px;color:#b4b4b4;letter-spacing:.15px;">Artboards</div>
<svg class="abs" style="left:339.0px;top:9.6px" width="8.0" height="6.0" viewBox="0 0 8 6"><path d="M0.6 0.5L3 3L0.6 5.5M4.4 0.5L6.8 3L4.4 5.5" fill="none" stroke="#b8b8b8" stroke-width="1"/></svg>
<div class="abs" style="left:352.3px;top:7.0px;width:1.0px;height:10.0px;background:#a0a0a0;"></div>
<svg class="abs" style="left:357.0px;top:8.0px" width="10.0" height="9.0" viewBox="0 0 10 9"><path d="M0 1.2H9M0 4.4H9M0 7.6H9" stroke="#c4c4c4" stroke-width="1.2"/></svg>
<div class="abs" style="left:4.5px;top:28.3px;width:361.5px;height:249.3px;background:#474747;"></div>
<div class="abs" style="left:4.5px;top:44.5px;width:361.5px;height:1.1px;background:#3a3a3a;"></div>
<svg class="abs" style="left:7.6px;top:33.2px" width="10.0" height="7.0" viewBox="0 0 10 7"><path d="M0.7 3.5Q5 -1.3 9.3 3.5Q5 8.3 0.7 3.5Z" fill="none" stroke="#d0d0d0" stroke-width="1"/><circle cx="5" cy="3.5" r="1.6" fill="#d0d0d0"/></svg>
<div class="abs" style="left:39.0px;top:28.7px;width:3.4px;height:15.8px;background:#4a78dc;"></div>
<svg class="abs" style="left:47.0px;top:33.8px" width="8.0" height="6.0" viewBox="0 0 8 6"><path d="M1 1.2L4 4.4L7 1.2" fill="none" stroke="#d0d0d0" stroke-width="1.3"/></svg>
<div class="abs" style="left:62.7px;top:30.0px;width:13.6px;height:13.6px;background:#ffffff;"></div>
<div class="t" style="left:80.4px;top:33.3px;font-size:8.40px;color:#dcdcdc;">Level 2</div>
<svg class="abs" style="left:343.0px;top:32.8px" width="8.0" height="8.0" viewBox="0 0 8 8"><circle cx="4" cy="4" r="2.9" fill="none" stroke="#cfcfcf" stroke-width="1.1"/></svg>
<div class="abs" style="left:4.5px;top:61.1px;width:361.5px;height:1.1px;background:#3a3a3a;"></div>
<div class="abs" style="left:39.0px;top:45.3px;width:3.4px;height:15.8px;background:#4a78dc;"></div>
<svg class="abs" style="left:65.0px;top:49.4px" width="6.0" height="8.0" viewBox="0 0 6 8"><path d="M1.4 1L4.6 4L1.4 7" fill="none" stroke="#d0d0d0" stroke-width="1.3"/></svg>
<div class="abs" style="left:80.8px;top:46.6px;width:13.6px;height:13.6px;background:#ffffff;"></div>
<div class="t" style="left:98.6px;top:49.9px;font-size:8.40px;color:#dcdcdc;letter-spacing:.12px;">Side lables</div>
<svg class="abs" style="left:343.0px;top:49.4px" width="8.0" height="8.0" viewBox="0 0 8 8"><circle cx="4" cy="4" r="2.9" fill="none" stroke="#cfcfcf" stroke-width="1.1"/></svg>
<div class="abs" style="left:4.5px;top:77.8px;width:361.5px;height:1.1px;background:#3a3a3a;"></div>
<svg class="abs" style="left:7.6px;top:66.5px" width="10.0" height="7.0" viewBox="0 0 10 7"><path d="M0.7 3.5Q5 -1.3 9.3 3.5Q5 8.3 0.7 3.5Z" fill="none" stroke="#d0d0d0" stroke-width="1"/><circle cx="5" cy="3.5" r="1.6" fill="#d0d0d0"/></svg>
<div class="abs" style="left:39.0px;top:61.9px;width:3.4px;height:15.8px;background:#4a78dc;"></div>
<svg class="abs" style="left:65.0px;top:66.1px" width="6.0" height="8.0" viewBox="0 0 6 8"><path d="M1.4 1L4.6 4L1.4 7" fill="none" stroke="#d0d0d0" stroke-width="1.3"/></svg>
<div class="abs" style="left:80.8px;top:63.2px;width:13.6px;height:13.6px;background:#ffffff;"></div>
<div class="t" style="left:98.6px;top:66.5px;font-size:8.40px;color:#dcdcdc;letter-spacing:.12px;">Outline</div>
<svg class="abs" style="left:343.0px;top:66.1px" width="8.0" height="8.0" viewBox="0 0 8 8"><circle cx="4" cy="4" r="2.9" fill="none" stroke="#cfcfcf" stroke-width="1.1"/></svg>
<div class="abs" style="left:4.5px;top:94.4px;width:361.5px;height:1.1px;background:#3a3a3a;"></div>
<div class="abs" style="left:39.0px;top:78.6px;width:3.4px;height:15.8px;background:#4a78dc;"></div>
<svg class="abs" style="left:65.0px;top:82.7px" width="6.0" height="8.0" viewBox="0 0 6 8"><path d="M1.4 1L4.6 4L1.4 7" fill="none" stroke="#d0d0d0" stroke-width="1.3"/></svg>
<div class="abs" style="left:80.8px;top:79.9px;width:13.6px;height:13.6px;background:#ffffff;"></div>
<div class="t" style="left:98.6px;top:83.2px;font-size:8.40px;color:#dcdcdc;letter-spacing:.12px;">Zones</div>
<svg class="abs" style="left:343.0px;top:82.7px" width="8.0" height="8.0" viewBox="0 0 8 8"><circle cx="4" cy="4" r="2.9" fill="none" stroke="#cfcfcf" stroke-width="1.1"/></svg>
<div class="abs" style="left:4.5px;top:111.0px;width:361.5px;height:1.1px;background:#3a3a3a;"></div>
<svg class="abs" style="left:7.6px;top:99.7px" width="10.0" height="7.0" viewBox="0 0 10 7"><path d="M0.7 3.5Q5 -1.3 9.3 3.5Q5 8.3 0.7 3.5Z" fill="none" stroke="#d0d0d0" stroke-width="1"/><circle cx="5" cy="3.5" r="1.6" fill="#d0d0d0"/></svg>
<div class="abs" style="left:39.0px;top:95.2px;width:3.4px;height:15.8px;background:#4a78dc;"></div>
<svg class="abs" style="left:65.0px;top:99.3px" width="6.0" height="8.0" viewBox="0 0 6 8"><path d="M1.4 1L4.6 4L1.4 7" fill="none" stroke="#d0d0d0" stroke-width="1.3"/></svg>
<div class="abs" style="left:80.8px;top:96.5px;width:13.6px;height:13.6px;background:#ffffff;"></div>
<div class="t" style="left:98.6px;top:99.8px;font-size:8.40px;color:#dcdcdc;letter-spacing:.12px;">Skeleton</div>
<svg class="abs" style="left:343.0px;top:99.3px" width="8.0" height="8.0" viewBox="0 0 8 8"><circle cx="4" cy="4" r="2.9" fill="none" stroke="#cfcfcf" stroke-width="1.1"/></svg>
<div class="abs" style="left:4.5px;top:127.6px;width:361.5px;height:1.1px;background:#3a3a3a;"></div>
<div class="abs" style="left:39.0px;top:111.8px;width:3.4px;height:15.8px;background:#4a78dc;"></div>
<svg class="abs" style="left:65.0px;top:115.9px" width="6.0" height="8.0" viewBox="0 0 6 8"><path d="M1.4 1L4.6 4L1.4 7" fill="none" stroke="#d0d0d0" stroke-width="1.3"/></svg>
<div class="abs" style="left:80.8px;top:113.1px;width:13.6px;height:13.6px;background:#ffffff;"></div>
<div class="t" style="left:98.6px;top:116.4px;font-size:8.40px;color:#dcdcdc;letter-spacing:.12px;">bookings</div>
<svg class="abs" style="left:343.0px;top:115.9px" width="8.0" height="8.0" viewBox="0 0 8 8"><circle cx="4" cy="4" r="2.9" fill="none" stroke="#cfcfcf" stroke-width="1.1"/></svg>
<div class="abs" style="left:4.5px;top:144.2px;width:361.5px;height:1.1px;background:#3a3a3a;"></div>
<div class="abs" style="left:39.0px;top:128.4px;width:3.4px;height:15.8px;background:#4a78dc;"></div>
<svg class="abs" style="left:65.0px;top:132.5px" width="6.0" height="8.0" viewBox="0 0 6 8"><path d="M1.4 1L4.6 4L1.4 7" fill="none" stroke="#d0d0d0" stroke-width="1.3"/></svg>
<div class="abs" style="left:80.8px;top:129.7px;width:13.6px;height:13.6px;background:#ffffff;"></div>
<div class="t" style="left:98.6px;top:133.0px;font-size:8.40px;color:#dcdcdc;letter-spacing:.12px;">tags</div>
<svg class="abs" style="left:343.0px;top:132.5px" width="8.0" height="8.0" viewBox="0 0 8 8"><circle cx="4" cy="4" r="2.9" fill="none" stroke="#cfcfcf" stroke-width="1.1"/></svg>
<div class="abs" style="left:4.5px;top:160.9px;width:361.5px;height:1.1px;background:#3a3a3a;"></div>
<div class="abs" style="left:39.0px;top:145.0px;width:3.4px;height:15.8px;background:#4a78dc;"></div>
<svg class="abs" style="left:65.0px;top:149.2px" width="6.0" height="8.0" viewBox="0 0 6 8"><path d="M1.4 1L4.6 4L1.4 7" fill="none" stroke="#d0d0d0" stroke-width="1.3"/></svg>
<div class="abs" style="left:80.8px;top:146.4px;width:13.6px;height:13.6px;background:#ffffff;"></div>
<div class="t" style="left:98.6px;top:149.6px;font-size:8.40px;color:#dcdcdc;letter-spacing:.12px;">Signage</div>
<svg class="abs" style="left:343.0px;top:149.2px" width="8.0" height="8.0" viewBox="0 0 8 8"><circle cx="4" cy="4" r="2.9" fill="none" stroke="#cfcfcf" stroke-width="1.1"/></svg>
<div class="abs" style="left:4.5px;top:177.5px;width:361.5px;height:1.1px;background:#3a3a3a;"></div>
<div class="abs" style="left:39.0px;top:161.7px;width:3.4px;height:15.8px;background:#4a78dc;"></div>
<svg class="abs" style="left:65.0px;top:165.8px" width="6.0" height="8.0" viewBox="0 0 6 8"><path d="M1.4 1L4.6 4L1.4 7" fill="none" stroke="#d0d0d0" stroke-width="1.3"/></svg>
<div class="abs" style="left:80.8px;top:163.0px;width:13.6px;height:13.6px;background:#ffffff;"></div>
<div class="t" style="left:98.6px;top:166.3px;font-size:8.40px;color:#dcdcdc;letter-spacing:.12px;">area-02-closed</div>
<svg class="abs" style="left:343.0px;top:165.8px" width="8.0" height="8.0" viewBox="0 0 8 8"><circle cx="4" cy="4" r="2.9" fill="none" stroke="#cfcfcf" stroke-width="1.1"/></svg>
<div class="abs" style="left:42.0px;top:178.1px;width:324.0px;height:16.6px;background:#41618c;"></div>
<div class="abs" style="left:4.5px;top:194.1px;width:361.5px;height:1.1px;background:#3a3a3a;"></div>
<svg class="abs" style="left:7.6px;top:182.8px" width="10.0" height="7.0" viewBox="0 0 10 7"><path d="M0.7 3.5Q5 -1.3 9.3 3.5Q5 8.3 0.7 3.5Z" fill="none" stroke="#d0d0d0" stroke-width="1"/><circle cx="5" cy="3.5" r="1.6" fill="#d0d0d0"/></svg>
<div class="abs" style="left:39.0px;top:178.3px;width:3.4px;height:15.8px;background:#4a78dc;"></div>
<svg class="abs" style="left:65.0px;top:182.4px" width="6.0" height="8.0" viewBox="0 0 6 8"><path d="M1.4 1L4.6 4L1.4 7" fill="none" stroke="#d0d0d0" stroke-width="1.3"/></svg>
<div class="abs" style="left:80.8px;top:179.6px;width:13.6px;height:13.6px;background:#ffffff;"></div>
<div class="t" style="left:98.6px;top:182.9px;font-size:8.40px;color:#dcdcdc;letter-spacing:.12px;">plants and furniature</div>
<svg class="abs" style="left:343.0px;top:182.4px" width="8.0" height="8.0" viewBox="0 0 8 8"><circle cx="4" cy="4" r="2.9" fill="none" stroke="#cfcfcf" stroke-width="1.1"/></svg>
<div class="abs" style="left:4.5px;top:210.7px;width:361.5px;height:1.1px;background:#3a3a3a;"></div>
<svg class="abs" style="left:7.6px;top:199.4px" width="10.0" height="7.0" viewBox="0 0 10 7"><path d="M0.7 3.5Q5 -1.3 9.3 3.5Q5 8.3 0.7 3.5Z" fill="none" stroke="#d0d0d0" stroke-width="1"/><circle cx="5" cy="3.5" r="1.6" fill="#d0d0d0"/></svg>
<div class="abs" style="left:39.0px;top:194.9px;width:3.4px;height:15.8px;background:#4a78dc;"></div>
<svg class="abs" style="left:65.0px;top:199.0px" width="6.0" height="8.0" viewBox="0 0 6 8"><path d="M1.4 1L4.6 4L1.4 7" fill="none" stroke="#d0d0d0" stroke-width="1.3"/></svg>
<div class="abs" style="left:80.8px;top:196.2px;width:13.6px;height:13.6px;background:#ffffff;"></div>
<div class="t" style="left:98.6px;top:199.5px;font-size:8.40px;color:#dcdcdc;letter-spacing:.12px;">spaces</div>
<svg class="abs" style="left:343.0px;top:199.0px" width="8.0" height="8.0" viewBox="0 0 8 8"><circle cx="4" cy="4" r="2.9" fill="none" stroke="#cfcfcf" stroke-width="1.1"/></svg>
<div class="abs" style="left:4.5px;top:227.3px;width:361.5px;height:1.1px;background:#3a3a3a;"></div>
<div class="abs" style="left:39.0px;top:211.5px;width:3.4px;height:15.8px;background:#4a78dc;"></div>
<svg class="abs" style="left:65.0px;top:215.6px" width="6.0" height="8.0" viewBox="0 0 6 8"><path d="M1.4 1L4.6 4L1.4 7" fill="none" stroke="#d0d0d0" stroke-width="1.3"/></svg>
<div class="abs" style="left:80.8px;top:212.8px;width:13.6px;height:13.6px;background:#ffffff;"></div>
<div class="t" style="left:98.6px;top:216.1px;font-size:8.40px;color:#dcdcdc;letter-spacing:.12px;">blanks</div>
<svg class="abs" style="left:343.0px;top:215.6px" width="8.0" height="8.0" viewBox="0 0 8 8"><circle cx="4" cy="4" r="2.9" fill="none" stroke="#cfcfcf" stroke-width="1.1"/></svg>
<div class="abs" style="left:4.5px;top:244.0px;width:361.5px;height:1.1px;background:#3a3a3a;"></div>
<div class="abs" style="left:39.0px;top:228.1px;width:3.4px;height:15.8px;background:#4a78dc;"></div>
<svg class="abs" style="left:65.0px;top:232.2px" width="6.0" height="8.0" viewBox="0 0 6 8"><path d="M1.4 1L4.6 4L1.4 7" fill="none" stroke="#d0d0d0" stroke-width="1.3"/></svg>
<div class="abs" style="left:80.8px;top:229.4px;width:13.6px;height:13.6px;background:#ffffff;"></div>
<div class="t" style="left:98.6px;top:232.7px;font-size:8.40px;color:#dcdcdc;letter-spacing:.12px;">architectural floor plan</div>
<svg class="abs" style="left:343.0px;top:232.2px" width="8.0" height="8.0" viewBox="0 0 8 8"><circle cx="4" cy="4" r="2.9" fill="none" stroke="#cfcfcf" stroke-width="1.1"/></svg>
<div class="abs" style="left:4.5px;top:260.6px;width:361.5px;height:1.1px;background:#3a3a3a;"></div>
<svg class="abs" style="left:7.6px;top:249.3px" width="10.0" height="7.0" viewBox="0 0 10 7"><path d="M0.7 3.5Q5 -1.3 9.3 3.5Q5 8.3 0.7 3.5Z" fill="none" stroke="#d0d0d0" stroke-width="1"/><circle cx="5" cy="3.5" r="1.6" fill="#d0d0d0"/></svg>
<div class="abs" style="left:39.0px;top:244.8px;width:3.4px;height:15.8px;background:#4a78dc;"></div>
<svg class="abs" style="left:65.0px;top:248.9px" width="6.0" height="8.0" viewBox="0 0 6 8"><path d="M1.4 1L4.6 4L1.4 7" fill="none" stroke="#d0d0d0" stroke-width="1.3"/></svg>
<div class="abs" style="left:80.8px;top:246.1px;width:13.6px;height:13.6px;background:#ffffff;"></div>
<div class="t" style="left:98.6px;top:249.4px;font-size:8.40px;color:#dcdcdc;letter-spacing:.12px;">bkr</div>
<svg class="abs" style="left:343.0px;top:248.9px" width="8.0" height="8.0" viewBox="0 0 8 8"><circle cx="4" cy="4" r="2.9" fill="none" stroke="#cfcfcf" stroke-width="1.1"/></svg>
<div class="abs" style="left:4.5px;top:277.2px;width:361.5px;height:1.1px;background:#3a3a3a;"></div>
<div class="abs" style="left:39.0px;top:261.4px;width:3.4px;height:15.8px;background:#4a78dc;"></div>
<div class="abs" style="left:80.8px;top:262.7px;width:13.6px;height:13.6px;background:#ffffff;"></div>
<div class="t" style="left:98.6px;top:266.0px;font-size:8.40px;color:#dcdcdc;letter-spacing:.12px;">&lt;Group&gt;</div>
<svg class="abs" style="left:343.0px;top:265.5px" width="8.0" height="8.0" viewBox="0 0 8 8"><circle cx="4" cy="4" r="2.9" fill="none" stroke="#cfcfcf" stroke-width="1.1"/></svg>
<div class="abs" style="left:22.6px;top:28.3px;width:1.0px;height:249.3px;background:#3e3e3e;"></div>
<div class="abs" style="left:37.4px;top:28.3px;width:1.0px;height:249.3px;background:#3e3e3e;"></div>
<svg class="abs" style="left:81.4px;top:63.9px" width="12.4" height="12.4" viewBox="0 0 12.4 12.4"><path d="M1 3L9 2L10.4 9L3 10Z" fill="none" stroke="#d9d9d9" stroke-width=".7"/></svg>
<svg class="abs" style="left:81.4px;top:80.5px" width="12.4" height="12.4" viewBox="0 0 12.4 12.4"><path d="M1.4 8L6 2.4L10 8.6Z" fill="#e9a13a"/><path d="M1 5L5 1.6L7 5Z" fill="#d44a3a"/><path d="M6 6L10 4.4L10 9Z" fill="#62b24a"/></svg>
<svg class="abs" style="left:81.4px;top:113.7px" width="12.4" height="12.4" viewBox="0 0 12.4 12.4"><circle cx="3" cy="3" r=".7" fill="#5a8a4a"/><circle cx="7" cy="8" r=".7" fill="#5a8a4a"/><circle cx="4" cy="7" r=".6" fill="#555"/><circle cx="9" cy="4" r=".6" fill="#5a8a4a"/></svg>
<svg class="abs" style="left:81.4px;top:147.0px" width="12.4" height="12.4" viewBox="0 0 12.4 12.4"><path d="M2 9L5.6 2.4L9 8" fill="none" stroke="#c9c9c9" stroke-width=".6"/><circle cx="3" cy="4" r=".6" fill="#999"/><circle cx="8" cy="9" r=".6" fill="#999"/></svg>
<svg class="abs" style="left:81.4px;top:180.2px" width="12.4" height="12.4" viewBox="0 0 12.4 12.4"><path d="M1.4 3L6 1.6L10 4.4L8.6 9.6L3 9Z" fill="none" stroke="#3f8a3a" stroke-width="1"/><path d="M3 4L7.6 8M8 3L4.4 7" stroke="#3f8a3a" stroke-width=".8"/></svg>
<svg class="abs" style="left:81.4px;top:196.8px" width="12.4" height="12.4" viewBox="0 0 12.4 12.4"><path d="M2 7L4 3.4L6.4 5M6 9L9 7.6L8 4" fill="none" stroke="#8fb4e6" stroke-width=".9"/></svg>
<svg class="abs" style="left:81.4px;top:213.4px" width="12.4" height="12.4" viewBox="0 0 12.4 12.4"><path d="M3 4L5 3L5.6 5M6.4 7.6L8.4 6.4L8.6 8.6" fill="none" stroke="#a9bfe0" stroke-width=".9"/></svg>
<svg class="abs" style="left:81.4px;top:246.7px" width="12.4" height="12.4" viewBox="0 0 12.4 12.4"><path d="M1 5.6L6 2.4L11 6.4L7 10L2.4 9Z" fill="#c6dcf0"/></svg>
<svg class="abs" style="left:361.2px;top:28.3px" width="6.0" height="6.0" viewBox="0 0 6 6"><path d="M0.4 0.4H5.6V5.6Z" fill="#e8e8e8"/></svg>
<div class="abs" style="left:366.0px;top:23.5px;width:6.0px;height:482.0px;background:#464646;"></div>
<div class="abs" style="left:0.0px;top:505.6px;width:372.0px;height:1.0px;background:#383838;"></div>
<div class="t" style="left:5.0px;top:509.9px;font-size:8.70px;color:#d0d0d0;">1 Layer</div>
<svg class="abs" style="left:237.0px;top:509.5px" width="11.0" height="11.0" viewBox="0 0 11 11"><path d="M5 2H1.4V9.6H9V6.4" fill="none" stroke="#cfcfcf" stroke-width="1.1"/><path d="M6.4 1.2H9.8V4.6M9.6 1.4L5 6" fill="none" stroke="#cfcfcf" stroke-width="1.1"/></svg>
<svg class="abs" style="left:257.0px;top:509.5px" width="11.0" height="11.0" viewBox="0 0 11 11"><circle cx="6.2" cy="4.6" r="3" fill="none" stroke="#6a6a6a" stroke-width="1.1"/><path d="M4 7L1.4 10" stroke="#6a6a6a" stroke-width="1.3"/></svg>
<svg class="abs" style="left:277.0px;top:509.5px" width="11.0" height="11.0" viewBox="0 0 11 11"><rect x="1" y="1" width="7" height="7" fill="none" stroke="#cfcfcf" stroke-width="1"/><rect x="3.6" y="3.6" width="6.4" height="6.4" fill="#cfcfcf"/></svg>
<svg class="abs" style="left:297.0px;top:509.5px" width="12.0" height="11.0" viewBox="0 0 12 11"><path d="M1 2H5M1 4.6H4M1 7H4" stroke="#6a6a6a" stroke-width="1.1"/><path d="M6 3H11V10H6Z" fill="#6a6a6a"/></svg>
<svg class="abs" style="left:318.0px;top:509.5px" width="11.0" height="11.0" viewBox="0 0 11 11"><path d="M1.4 1.4H9.6V9.6H4.4L1.4 6.6Z" fill="#cfcfcf"/><path d="M1.4 6.6H4.4V9.6" fill="#494949"/></svg>
<svg class="abs" style="left:339.5px;top:508.5px" width="11.0" height="13.0" viewBox="0 0 11 13"><path d="M1 3H10M4 3V1.4H7V3" fill="none" stroke="#cfcfcf" stroke-width="1.1"/><path d="M2.2 3.6H8.8L8.2 11.6H2.8Z" fill="none" stroke="#cfcfcf" stroke-width="1.1"/><path d="M4.4 5.4V10M6.6 5.4V10" stroke="#cfcfcf" stroke-width=".9"/></svg></div>
<div class="abs" id="status"></div>
<div class="abs" style="left:663px;top:648px;width:373px;height:9px;background:#3d3d3d"></div>
<div class="abs" id="botline"></div>
<svg class="abs" style="left:5.0px;top:8.5px" width="12.0" height="12.0" viewBox="0 0 12 12"><circle cx="6" cy="6" r="5.2" fill="#ee5c57"/><circle cx="6" cy="6" r="1.6" fill="#4d0a08"/></svg>
<svg class="abs" style="left:20.7px;top:8.5px" width="12.0" height="12.0" viewBox="0 0 12 12"><circle cx="6" cy="6" r="5.2" fill="#f6b82f"/><rect x="3" y="5.3" width="6" height="1.4" fill="#8a5a05"/></svg>
<svg class="abs" style="left:36.7px;top:8.5px" width="12.0" height="12.0" viewBox="0 0 12 12"><circle cx="6" cy="6" r="5.2" fill="#2bc63f"/><path d="M2.6 6H9.4M6 2.6V9.4" stroke="#0b5c13" stroke-width="1.4"/></svg>
<svg class="abs" style="left:57.0px;top:7.0px" width="16.0" height="14.0" viewBox="0 0 16 14"><path d="M8 1L15 7.6H13V13H9.6V9H6.4V13H3V7.6H1Z" fill="#b9b9b9"/></svg>
<div class="abs" style="left:80.0px;top:8.0px;width:1.0px;height:12.0px;background:#555;"></div>
<svg class="abs" style="left:87.0px;top:8.0px" width="15.0" height="10.0" viewBox="0 0 15 10"><rect x="0" y="0" width="5.2" height="9" fill="#b5b5b5"/><rect x="6.4" y="0" width="7.6" height="4" fill="#b5b5b5"/><rect x="6.4" y="5" width="7.6" height="4" fill="#b5b5b5"/></svg>
<svg class="abs" style="left:106.0px;top:9.8px" width="8.0" height="6.0" viewBox="0 0 8 6"><path d="M1 1.2L4 4.4L7 1.2" fill="none" stroke="#cfcfcf" stroke-width="1.3"/></svg>
<div class="t" style="left:432.0px;top:8.8px;font-size:10.40px;color:#b4b4b4;">Adobe Illustrator CC 2019</div>
<svg class="abs" style="left:867.2px;top:7.6px" width="10.2" height="14.4" viewBox="0 0 12 17"><path d="M6 1.2A4.3 4.3 0 0 1 8.3 9.2V11.4H3.7V9.2A4.3 4.3 0 0 1 6 1.2ZM4 13H8M4.6 14.8H7.4" fill="none" stroke="#a8a8a8" stroke-width="1.2"/></svg>
<div class="abs" style="left:886.0px;top:7.0px;width:1.0px;height:15.0px;background:#4a4a4a;"></div>
<div class="t" style="left:898.0px;top:8.7px;font-size:9.80px;color:#e2e2e2;font-weight:700;letter-spacing:.2px;">Automation</div>
<svg class="abs" style="left:962.0px;top:11.2px" width="8.0" height="6.0" viewBox="0 0 8 6"><path d="M1 1.2L4 4.4L7 1.2" fill="none" stroke="#cfcfcf" stroke-width="1.3"/></svg>
<div class="abs" style="left:980.0px;top:7.0px;width:1.0px;height:15.0px;background:#4a4a4a;"></div>
<div class="abs" style="left:986.0px;top:6.0px;width:148.0px;height:15.5px;background:#343434;border:1px solid #4f4f4f;border-radius:2px"></div>
<svg class="abs" style="left:990.0px;top:8.0px" width="16.0" height="12.0" viewBox="0 0 16 12"><circle cx="5" cy="5" r="3.4" fill="none" stroke="#a5a5a5" stroke-width="1.2"/><path d="M7.4 7.6L10.4 10.8" stroke="#a5a5a5" stroke-width="1.4"/><path d="M11 7L12.6 8.8L14.2 7Z" fill="#a5a5a5"/></svg>
<div class="t" style="left:1007.0px;top:9.2px;font-size:9.10px;color:#767676;">Search Adobe Stock</div>
<div class="abs" style="left:5.0px;top:33.0px;width:1.0px;height:17.0px;background:#555;"></div>
<div class="t" style="left:11.0px;top:36.6px;font-size:8.40px;color:#c9c9c9;">No Selection</div>
<div class="abs" style="left:87.0px;top:33.2px;width:15.3px;height:15.3px;background:#ffffff;border:1px solid #8a8a8a"></div>
<svg class="abs" style="left:105.3px;top:38.3px" width="8.0" height="6.0" viewBox="0 0 8 6"><path d="M1 1.2L4 4.4L7 1.2" fill="none" stroke="#cfcfcf" stroke-width="1.3"/></svg>
<div class="abs" style="left:121.6px;top:33.2px;width:15.3px;height:15.3px;background:#000;border:1.2px solid #e8e8e8"></div>
<div class="abs" style="left:126.7px;top:38.3px;width:5.2px;height:5.2px;background:#000;border:1.2px solid #e8e8e8"></div>
<svg class="abs" style="left:140.0px;top:38.3px" width="8.0" height="6.0" viewBox="0 0 8 6"><path d="M1 1.2L4 4.4L7 1.2" fill="none" stroke="#cfcfcf" stroke-width="1.3"/></svg>
<div class="t" style="left:161.0px;top:37.3px;font-size:8.70px;color:#e6e6e6;border-bottom:1px dotted #aaa;padding-bottom:1px;">Stroke:</div>
<svg class="abs" style="left:196.0px;top:34.5px" width="8.0" height="14.0" viewBox="0 0 8 14"><path d="M1.2 4.8L4 1.8L6.8 4.8M1.2 9.2L4 12.2L6.8 9.2" fill="none" stroke="#cfcfcf" stroke-width="1.2"/></svg>
<div class="abs" style="left:207.0px;top:33.5px;width:39.0px;height:15.5px;background:#3a3a3a;border-radius:1px"></div>
<div class="abs" style="left:247.0px;top:33.5px;width:13.0px;height:15.5px;background:#3c3c3c;border-radius:1px"></div>
<div class="abs" style="left:339.5px;top:33.5px;width:11.0px;height:15.5px;background:#3c3c3c;border-radius:1px"></div>
<div class="abs" style="left:426.5px;top:33.5px;width:11.0px;height:15.5px;background:#3c3c3c;border-radius:1px"></div>
<div class="t" style="left:211.0px;top:36.4px;font-size:8.70px;color:#e0e0e0;">1 pt</div>
<svg class="abs" style="left:249.0px;top:38.3px" width="8.0" height="6.0" viewBox="0 0 8 6"><path d="M1 1.2L4 4.4L7 1.2" fill="none" stroke="#cfcfcf" stroke-width="1.3"/></svg>
<div class="abs" style="left:266.0px;top:33.3px;width:71.5px;height:15.4px;background:#dcdcdc;border:1px solid #f4f4f4"></div>
<div class="abs" style="left:272.0px;top:40.6px;width:26.0px;height:1.2px;background:#222;"></div>
<div class="t" style="left:301.5px;top:36.7px;font-size:8.50px;color:#202020;font-weight:700;">Uniform</div>
<svg class="abs" style="left:341.0px;top:38.3px" width="8.0" height="6.0" viewBox="0 0 8 6"><path d="M1 1.2L4 4.4L7 1.2" fill="none" stroke="#cfcfcf" stroke-width="1.3"/></svg>
<div class="abs" style="left:356.0px;top:33.3px;width:69.0px;height:15.4px;background:#dcdcdc;border:1px solid #f4f4f4"></div>
<div class="abs" style="left:361.0px;top:40.6px;width:35.0px;height:1.2px;background:#222;"></div>
<div class="t" style="left:399.5px;top:36.7px;font-size:8.50px;color:#202020;font-weight:700;">Basic</div>
<svg class="abs" style="left:428.0px;top:38.3px" width="8.0" height="6.0" viewBox="0 0 8 6"><path d="M1 1.2L4 4.4L7 1.2" fill="none" stroke="#cfcfcf" stroke-width="1.3"/></svg>
<div class="t" style="left:445.0px;top:37.3px;font-size:8.70px;color:#e6e6e6;border-bottom:1px dotted #aaa;padding-bottom:1px;">Opacity:</div>
<div class="abs" style="left:480.5px;top:33.5px;width:47.0px;height:15.5px;background:#3a3a3a;"></div>
<div class="abs" style="left:529.0px;top:33.5px;width:10.0px;height:15.5px;background:#3c3c3c;border-radius:1px"></div>
<div class="abs" style="left:589.0px;top:33.5px;width:11.0px;height:15.5px;background:#3c3c3c;border-radius:1px"></div>
<div class="t" style="left:484.0px;top:36.5px;font-size:8.50px;color:#e0e0e0;">100%</div>
<svg class="abs" style="left:531.0px;top:37.5px" width="6.0" height="8.0" viewBox="0 0 6 8"><path d="M1.4 1L4.6 4L1.4 7" fill="none" stroke="#cfcfcf" stroke-width="1.2"/></svg>
<div class="t" style="left:546.0px;top:37.3px;font-size:8.70px;color:#a9a9a9;">Style:</div>
<div class="abs" style="left:571.0px;top:33.3px;width:16.0px;height:15.4px;background:#dadada;border:1px solid #f0f0f0"></div>
<svg class="abs" style="left:590.5px;top:38.3px" width="8.0" height="6.0" viewBox="0 0 8 6"><path d="M1 1.2L4 4.4L7 1.2" fill="none" stroke="#cfcfcf" stroke-width="1.3"/></svg>
<div class="abs" style="left:611.5px;top:34.0px;width:79.0px;height:14.5px;background:#464646;border:1px solid #646464;border-radius:2px"></div>
<div class="t" style="left:611.5px;top:36.6px;width:79.0px;text-align:center;font-size:8.6px;color:#e0e0e0">Document Setup</div>
<div class="abs" style="left:693.8px;top:34.0px;width:59.5px;height:14.5px;background:#464646;border:1px solid #646464;border-radius:2px"></div>
<div class="t" style="left:693.8px;top:36.6px;width:59.5px;text-align:center;font-size:8.6px;color:#e0e0e0">Preferences</div>
<svg class="abs" style="left:762.0px;top:35.0px" width="14.0" height="13.0" viewBox="0 0 14 13"><rect x="1" y="3" width="4" height="4" fill="none" stroke="#c4c4c4" stroke-width="1"/><rect x="8.5" y="1" width="4" height="4" fill="none" stroke="#c4c4c4" stroke-width="1"/><path d="M5 5H8.5" stroke="#c4c4c4"/><path d="M5 6L12 8.6L9 9.6L8 12.4Z" fill="#d6d6d6"/></svg>
<svg class="abs" style="left:779.0px;top:38.3px" width="8.0" height="6.0" viewBox="0 0 8 6"><path d="M1 1.2L4 4.4L7 1.2" fill="none" stroke="#cfcfcf" stroke-width="1.3"/></svg>
<svg class="abs" style="left:1056.0px;top:36.0px" width="11.0" height="11.0" viewBox="0 0 11 11"><rect x="1" y="1" width="3.4" height="3.4" fill="#606060"/><rect x="6.6" y="1" width="3.4" height="3.4" fill="#606060"/><rect x="1" y="6.6" width="3.4" height="3.4" fill="#606060"/><rect x="6.6" y="6.6" width="3.4" height="3.4" fill="#606060"/></svg>
<svg class="abs" style="left:1076.0px;top:35.0px" width="13.0" height="13.0" viewBox="0 0 13 13"><path d="M1.5 1V12" stroke="#cfcfcf" stroke-width="1.3"/><rect x="3.5" y="2" width="5" height="3" fill="#cfcfcf"/><rect x="3.5" y="7.5" width="8" height="3" fill="none" stroke="#cfcfcf" stroke-width="1.1"/></svg>
<svg class="abs" style="left:1092.0px;top:38.3px" width="8.0" height="6.0" viewBox="0 0 8 6"><path d="M1 1.2L4 4.4L7 1.2" fill="none" stroke="#5c5c5c" stroke-width="1.3"/></svg>
<svg class="abs" style="left:1114.0px;top:36.5px" width="11.0" height="10.0" viewBox="0 0 11 10"><path d="M0 1.5H2M3.4 1.5H10.5M0 5H2M3.4 5H10.5M0 8.5H2M3.4 8.5H10.5" stroke="#c4c4c4" stroke-width="1.4"/></svg>
<svg class="abs" style="left:3.6px;top:56.8px" width="7.0" height="4.6" viewBox="0 0 7 4.6"><path d="M0.6 0.4L2.6 2.3L0.6 4.2M3.8 0.4L5.8 2.3L3.8 4.2" fill="none" stroke="#c4c4c4" stroke-width="1"/></svg>
<svg class="abs" style="left:37.5px;top:62.8px" width="7.0" height="7.0" viewBox="0 0 7 7"><path d="M1 1L6 6M6 1L1 6" stroke="#e0e0e0" stroke-width="1.3"/></svg>
<div class="t" style="left:51.0px;top:61.8px;font-size:8.44px;color:#e8e8e8;font-weight:700;">Level 2 Map (booking overlays)V6.svg* @ 50% (RGB/GPU Preview)</div>
<svg class="abs" style="left:1023.4px;top:56.8px" width="7.0" height="4.6" viewBox="0 0 7 4.6"><path d="M2.6 0.4L0.6 2.3L2.6 4.2M5.8 0.4L3.8 2.3L5.8 4.2" fill="none" stroke="#c4c4c4" stroke-width="1"/></svg>
<svg class="abs" style="left:1127.4px;top:56.8px" width="7.0" height="4.6" viewBox="0 0 7 4.6"><path d="M2.6 0.4L0.6 2.3L2.6 4.2M5.8 0.4L3.8 2.3L5.8 4.2" fill="none" stroke="#c4c4c4" stroke-width="1"/></svg>
<svg class="abs" style="left:32px;top:77px" width="958" height="13" viewBox="32 77 958 13"><path d="M33 83.5H45M38.5 78V90" stroke="#777" stroke-width=".8" stroke-dasharray="1 1"/><path d="M48.7 87.5V90M58.6 87.5V90M68.6 87.5V90M78.6 87.5V90M88.5 87.5V90M98.5 77V90M108.5 87.5V90M118.4 87.5V90M128.4 87.5V90M138.4 87.5V90M148.3 87.5V90M158.3 87.5V90M168.3 87.5V90M178.2 87.5V90M188.2 87.5V90M198.2 77V90M208.1 87.5V90M218.1 87.5V90M228.0 87.5V90M238.0 87.5V90M248.0 87.5V90M257.9 87.5V90M267.9 87.5V90M277.9 87.5V90M287.8 87.5V90M297.8 77V90M307.8 87.5V90M317.7 87.5V90M327.7 87.5V90M337.7 87.5V90M347.6 87.5V90M357.6 87.5V90M367.6 87.5V90M377.5 87.5V90M387.5 87.5V90M397.4 77V90M407.4 87.5V90M417.4 87.5V90M427.3 87.5V90M437.3 87.5V90M447.3 87.5V90M457.2 87.5V90M467.2 87.5V90M477.2 87.5V90M487.1 87.5V90M497.1 77V90M507.1 87.5V90M517.0 87.5V90M527.0 87.5V90M537.0 87.5V90M546.9 87.5V90M556.9 87.5V90M566.9 87.5V90M576.8 87.5V90M586.8 87.5V90M596.8 77V90M606.7 87.5V90M616.7 87.5V90M626.6 87.5V90M636.6 87.5V90M646.6 87.5V90M656.5 87.5V90M666.5 87.5V90M676.5 87.5V90M686.4 87.5V90M696.4 77V90M706.4 87.5V90M716.3 87.5V90M726.3 87.5V90M736.3 87.5V90M746.2 87.5V90M756.2 87.5V90M766.2 87.5V90M776.1 87.5V90M786.1 87.5V90M796.0 77V90M806.0 87.5V90M816.0 87.5V90M825.9 87.5V90M835.9 87.5V90M845.9 87.5V90M855.8 87.5V90M865.8 87.5V90M875.8 87.5V90M885.7 87.5V90M895.7 77V90M905.7 87.5V90M915.6 87.5V90M925.6 87.5V90M935.6 87.5V90M945.5 87.5V90M955.5 87.5V90M965.5 87.5V90M975.4 87.5V90M985.4 87.5V90" stroke="#707070" stroke-width=".8"/><text x="100.9" y="86.6" font-size="8.3" fill="#b4b4b4" font-family="Liberation Sans, sans-serif" letter-spacing=".3">150</text><text x="200.6" y="86.6" font-size="8.3" fill="#b4b4b4" font-family="Liberation Sans, sans-serif" letter-spacing=".3">200</text><text x="300.2" y="86.6" font-size="8.3" fill="#b4b4b4" font-family="Liberation Sans, sans-serif" letter-spacing=".3">250</text><text x="399.9" y="86.6" font-size="8.3" fill="#b4b4b4" font-family="Liberation Sans, sans-serif" letter-spacing=".3">300</text><text x="499.5" y="86.6" font-size="8.3" fill="#b4b4b4" font-family="Liberation Sans, sans-serif" letter-spacing=".3">350</text><text x="599.1" y="86.6" font-size="8.3" fill="#b4b4b4" font-family="Liberation Sans, sans-serif" letter-spacing=".3">400</text><text x="698.8" y="86.6" font-size="8.3" fill="#b4b4b4" font-family="Liberation Sans, sans-serif" letter-spacing=".3">450</text><text x="798.5" y="86.6" font-size="8.3" fill="#b4b4b4" font-family="Liberation Sans, sans-serif" letter-spacing=".3">500</text><text x="898.1" y="86.6" font-size="8.3" fill="#b4b4b4" font-family="Liberation Sans, sans-serif" letter-spacing=".3">550</text></svg>
<svg class="abs" style="left:32px;top:90px" width="13" height="558" viewBox="32 90 13 558"><path d="M42.5 98.7H45M42.5 108.6H45M42.5 118.6H45M42.5 128.6H45M42.5 138.5H45M42.5 148.5H45M42.5 158.5H45M42.5 168.4H45M32 178.4H45M42.5 188.4H45M42.5 198.3H45M42.5 208.3H45M42.5 218.3H45M42.5 228.2H45M42.5 238.2H45M42.5 248.2H45M42.5 258.1H45M42.5 268.1H45M32 278.1H45M42.5 288.0H45M42.5 298.0H45M42.5 307.9H45M42.5 317.9H45M42.5 327.9H45M42.5 337.8H45M42.5 347.8H45M42.5 357.8H45M42.5 367.7H45M32 377.7H45M42.5 387.7H45M42.5 397.6H45M42.5 407.6H45M42.5 417.6H45M42.5 427.5H45M42.5 437.5H45M42.5 447.5H45M42.5 457.4H45M42.5 467.4H45M32 477.4H45M42.5 487.3H45M42.5 497.3H45M42.5 507.2H45M42.5 517.2H45M42.5 527.2H45M42.5 537.1H45M42.5 547.1H45M42.5 557.1H45M42.5 567.0H45M32 577.0H45M42.5 587.0H45M42.5 596.9H45M42.5 606.9H45M42.5 616.9H45M42.5 626.8H45M42.5 636.8H45M42.5 646.8H45" stroke="#707070" stroke-width=".8"/><text x="36.2" y="160.8" font-size="7.8" fill="#b4b4b4" font-family="Liberation Sans, sans-serif" text-anchor="middle">1</text><text x="36.2" y="167.5" font-size="7.8" fill="#b4b4b4" font-family="Liberation Sans, sans-serif" text-anchor="middle">5</text><text x="36.2" y="174.2" font-size="7.8" fill="#b4b4b4" font-family="Liberation Sans, sans-serif" text-anchor="middle">0</text><text x="36.2" y="260.4" font-size="7.8" fill="#b4b4b4" font-family="Liberation Sans, sans-serif" text-anchor="middle">2</text><text x="36.2" y="267.1" font-size="7.8" fill="#b4b4b4" font-family="Liberation Sans, sans-serif" text-anchor="middle">0</text><text x="36.2" y="273.8" font-size="7.8" fill="#b4b4b4" font-family="Liberation Sans, sans-serif" text-anchor="middle">0</text><text x="36.2" y="360.1" font-size="7.8" fill="#b4b4b4" font-family="Liberation Sans, sans-serif" text-anchor="middle">2</text><text x="36.2" y="366.8" font-size="7.8" fill="#b4b4b4" font-family="Liberation Sans, sans-serif" text-anchor="middle">5</text><text x="36.2" y="373.5" font-size="7.8" fill="#b4b4b4" font-family="Liberation Sans, sans-serif" text-anchor="middle">0</text><text x="36.2" y="459.8" font-size="7.8" fill="#b4b4b4" font-family="Liberation Sans, sans-serif" text-anchor="middle">3</text><text x="36.2" y="466.4" font-size="7.8" fill="#b4b4b4" font-family="Liberation Sans, sans-serif" text-anchor="middle">0</text><text x="36.2" y="473.1" font-size="7.8" fill="#b4b4b4" font-family="Liberation Sans, sans-serif" text-anchor="middle">0</text><text x="36.2" y="559.4" font-size="7.8" fill="#b4b4b4" font-family="Liberation Sans, sans-serif" text-anchor="middle">3</text><text x="36.2" y="566.1" font-size="7.8" fill="#b4b4b4" font-family="Liberation Sans, sans-serif" text-anchor="middle">5</text><text x="36.2" y="572.8" font-size="7.8" fill="#b4b4b4" font-family="Liberation Sans, sans-serif" text-anchor="middle">0</text><text x="36.2" y="659.0" font-size="7.8" fill="#b4b4b4" font-family="Liberation Sans, sans-serif" text-anchor="middle">4</text><text x="36.2" y="665.8" font-size="7.8" fill="#b4b4b4" font-family="Liberation Sans, sans-serif" text-anchor="middle">0</text><text x="36.2" y="672.4" font-size="7.8" fill="#b4b4b4" font-family="Liberation Sans, sans-serif" text-anchor="middle">0</text></svg>
<svg class="abs" style="left:992.5px;top:80.0px" width="9.0" height="7.0" viewBox="0 0 9 7"><path d="M1.2 5.4L4.5 1.8L7.8 5.4" fill="none" stroke="#6d6d6d" stroke-width="1.3"/></svg>
<div class="abs" style="left:33.0px;top:648.5px;width:40.0px;height:9.0px;background:#3a3a3a;"></div>
<div class="t" style="left:38.0px;top:651.2px;font-size:8.60px;color:#d8d8d8;">50%</div>
<svg class="abs" style="left:77.5px;top:653.0px" width="8.0" height="6.0" viewBox="0 0 8 6"><path d="M1 1.2L4 4.4L7 1.2" fill="none" stroke="#cfcfcf" stroke-width="1.3"/></svg>
<svg class="abs" style="left:95.5px;top:652.0px" width="8.0" height="8.0" viewBox="0 0 8 8"><path d="M1 1V7M7 1L2.6 4L7 7Z" fill="#5e5e5e" stroke="#5e5e5e" stroke-width="1"/></svg>
<svg class="abs" style="left:109.3px;top:652.0px" width="8.0" height="8.0" viewBox="0 0 8 8"><path d="M6 1L1.6 4L6 7Z" fill="#5e5e5e" stroke="#5e5e5e" stroke-width="1"/></svg>
<div class="abs" style="left:120.0px;top:648.5px;width:33.0px;height:9.0px;background:#3a3a3a;"></div>
<div class="t" style="left:125.0px;top:651.2px;font-size:8.60px;color:#d8d8d8;">1</div>
<svg class="abs" style="left:156.5px;top:653.0px" width="8.0" height="6.0" viewBox="0 0 8 6"><path d="M1 1.2L4 4.4L7 1.2" fill="none" stroke="#cfcfcf" stroke-width="1.3"/></svg>
<svg class="abs" style="left:174.0px;top:652.0px" width="8.0" height="8.0" viewBox="0 0 8 8"><path d="M2 1L6.4 4L2 7Z" fill="#5e5e5e" stroke="#5e5e5e" stroke-width="1"/></svg>
<svg class="abs" style="left:187.0px;top:652.0px" width="8.0" height="8.0" viewBox="0 0 8 8"><path d="M1 1L5.4 4L1 7ZM7 1V7" fill="#5e5e5e" stroke="#5e5e5e" stroke-width="1"/></svg>
<div class="t" style="left:236.0px;top:651.3px;font-size:8.70px;color:#b9b9b9;">Toggle Direct Selection</div>
<svg class="abs" style="left:363.0px;top:652.0px" width="7.0" height="8.0" viewBox="0 0 7 8"><path d="M1 0.5L6 4L1 7.5Z" fill="#cfcfcf"/></svg>
<svg class="abs" style="left:378.0px;top:652.0px" width="6.0" height="8.0" viewBox="0 0 6 8"><path d="M4.6 1L1.4 4L4.6 7" fill="none" stroke="#8f8f8f" stroke-width="1.1"/></svg><div class="abs" style="left:9.0px;top:67.0px;width:12.0px;height:2.0px;background:transparent;border-top:1px dotted #5c5c5c;border-bottom:1px dotted #5c5c5c;height:3px"></div>
<div class="abs" style="left:4.0px;top:80.8px;width:22.0px;height:16.0px;background:#282828;border-radius:1px"></div>
<svg class="abs" style="left:5.0px;top:79.0px" width="20.0" height="20.0" viewBox="0 0 20 20"><path d="M5.8 4.3L15 11.2L9.6 12L6 16.4Z" fill="none" stroke="#f0f0f0" stroke-width="1.2" stroke-linejoin="miter"/></svg>
<svg class="abs" style="left:5.0px;top:98.0px" width="20.0" height="20.0" viewBox="0 0 20 20"><path d="M6.4 4.2L14.7 12.6L10.2 13.3L6.8 17.1Z" fill="#c9c9c9"/><path d="M19.4 16.8V19.4H16.8Z" fill="#bdbdbd"/></svg>
<svg class="abs" style="left:5.0px;top:117.0px" width="20.0" height="20.0" viewBox="0 0 20 20"><path d="M11.6 3.4L15.8 7.6L13.6 9.8L9.4 5.6Z" fill="#c9c9c9"/><path d="M8.8 6.4L12.8 10.4L10.8 14.4L4 16L5.6 9.2Z" fill="#c9c9c9"/><circle cx="8.4" cy="11.6" r="1.1" fill="#464646"/><path d="M4.4 15.6L8 12" stroke="#464646" stroke-width=".9"/><path d="M19.4 16.8V19.4H16.8Z" fill="#bdbdbd"/></svg>
<svg class="abs" style="left:5.0px;top:136.0px" width="20.0" height="20.0" viewBox="0 0 20 20"><path d="M12.6 3.4L16.6 7.4L14.6 9.4L10.6 5.4Z" fill="#c9c9c9"/><path d="M10 6.2L13.8 10L12 13.8L6 15L7.2 9Z" fill="#c9c9c9"/><circle cx="9.8" cy="11" r="1" fill="#464646"/><path d="M6 15Q2 16.5 3 12.5Q4 9 3 6.2" fill="none" stroke="#c9c9c9" stroke-width="1.1"/><path d="M19.4 16.8V19.4H16.8Z" fill="#bdbdbd"/></svg>
<svg class="abs" style="left:5.0px;top:155.0px" width="20.0" height="20.0" viewBox="0 0 20 20"><rect x="3.6" y="4.6" width="13" height="11" fill="#727272" stroke="#c9c9c9" stroke-width="1.2"/><path d="M19.4 16.8V19.4H16.8Z" fill="#bdbdbd"/></svg>
<svg class="abs" style="left:5.0px;top:174.0px" width="20.0" height="20.0" viewBox="0 0 20 20"><path d="M15.8 3.2L17 4.4L10.4 12.4L8.4 10.6Z" fill="#c9c9c9"/><path d="M7.6 11.4L9.6 13.2Q9 16 4 16.2Q6.4 14.4 7.6 11.4Z" fill="#c9c9c9"/><path d="M19.4 16.8V19.4H16.8Z" fill="#bdbdbd"/></svg>
<div class="t" style="left:8.6px;top:194.5px;font-size:17px;color:#c9c9c9;font-family:'Liberation Serif',serif;font-weight:700">T</div>
<svg class="abs" style="left:5.0px;top:193.0px" width="20.0" height="20.0" viewBox="0 0 20 20"><path d="M19.4 16.8V19.4H16.8Z" fill="#bdbdbd"/></svg>
<svg class="abs" style="left:5.0px;top:212.0px" width="20.0" height="20.0" viewBox="0 0 20 20"><path d="M6.6 4.8A6.3 6.3 0 1 1 4 11.6" fill="none" stroke="#c9c9c9" stroke-width="1.2" stroke-dasharray="14 2 1.4 2 1.4 2 1.4 2 1.4 2 1.4 2"/><path d="M3.8 2.6L8.6 3.4L5 6.8Z" fill="#c9c9c9"/><path d="M19.4 16.8V19.4H16.8Z" fill="#bdbdbd"/></svg>
<svg class="abs" style="left:5.0px;top:231.0px" width="20.0" height="20.0" viewBox="0 0 20 20"><path d="M11.4 3.6L16.6 8L10.4 15.4L5.2 11Z" fill="#c9c9c9"/><path d="M5.2 11L10.4 15.4L8.6 17.2L3.6 13Z" fill="#e8e8e8"/><path d="M19.4 16.8V19.4H16.8Z" fill="#bdbdbd"/></svg>
<svg class="abs" style="left:5.0px;top:250.0px" width="20.0" height="20.0" viewBox="0 0 20 20"><circle cx="7.6" cy="8.6" r="4.6" fill="none" stroke="#c9c9c9" stroke-width="1.1"/><circle cx="10" cy="8.6" r="3.2" fill="none" stroke="#c9c9c9" stroke-width="1"/><path d="M10.4 10L17.4 13.4L13.6 14L12.4 17.4Z" fill="#c9c9c9"/></svg>
<svg class="abs" style="left:5px;top:269px" width="20" height="20"><defs><linearGradient id="tg" x1="0" y1="0" x2="1" y2="1"><stop offset="0" stop-color="#2e2e2e"/><stop offset="1" stop-color="#d8d8d8"/></linearGradient></defs><rect x="3.6" y="4.4" width="12.6" height="11.4" fill="url(#tg)" stroke="#c9c9c9" stroke-width="1.1"/><path d="M19.4 16.8V19.4H16.8Z" fill="#bdbdbd"/></svg>
<svg class="abs" style="left:5.0px;top:288.0px" width="20.0" height="20.0" viewBox="0 0 20 20"><path d="M14.4 2.8Q16.8 2.6 17 5L14.6 7.6L12.2 5.2Z" fill="#c9c9c9"/><path d="M11.4 5.4L14.4 8.4M12.6 7L5.6 14L4 16.4L6.4 14.8L13.4 7.8" fill="none" stroke="#c9c9c9" stroke-width="1.2"/></svg>
<svg class="abs" style="left:5.0px;top:307.0px" width="20.0" height="20.0" viewBox="0 0 20 20"><path d="M8 3.4Q10.4 2.4 10.4 5Q10 7 13 7.4Q16.6 8 15.4 11Q14 13 11.6 11.6Q9 10 8.4 13Q8 15.6 5.6 15.4" fill="none" stroke="#c9c9c9" stroke-width="1.5"/><circle cx="8.4" cy="3.6" r="1.4" fill="#c9c9c9"/><circle cx="15.4" cy="10.4" r="1.3" fill="#c9c9c9"/><path d="M4 13.2L7.6 16.8L4 17.6Z" fill="#c9c9c9"/></svg>
<svg class="abs" style="left:5.0px;top:326.0px" width="20.0" height="20.0" viewBox="0 0 20 20"><rect x="3.4" y="3.4" width="7" height="7" fill="#c9c9c9"/><circle cx="10.4" cy="10.4" r="3.4" fill="#8a8a8a" stroke="#464646" stroke-width=".8"/><circle cx="14" cy="13.6" r="3" fill="none" stroke="#c9c9c9" stroke-width="1.1"/></svg>
<svg class="abs" style="left:5.0px;top:345.0px" width="20.0" height="20.0" viewBox="0 0 20 20"><path d="M6 2.4V6M2.4 6H6" stroke="#c9c9c9" stroke-width="1.1" fill="none"/><path d="M6.6 6.6H12.6L15.8 9.8V16.6H6.6Z" fill="#8a8a8a" stroke="#c9c9c9" stroke-width="1.1"/></svg>
<svg class="abs" style="left:5.0px;top:364.0px" width="20.0" height="20.0" viewBox="0 0 20 20"><circle cx="8.4" cy="8.4" r="4.6" fill="none" stroke="#c9c9c9" stroke-width="1.3"/><path d="M11.8 11.8L16.4 16.6" stroke="#c9c9c9" stroke-width="1.7"/><path d="M19.4 16.8V19.4H16.8Z" fill="#bdbdbd"/></svg>
<svg class="abs" style="left:3.5px;top:388.5px" width="11.0" height="10.0" viewBox="0 0 11 10"><rect x="0.6" y="0.6" width="6" height="5.4" fill="#efefef"/><rect x="3.4" y="3.2" width="6.4" height="6" fill="#222" stroke="#efefef" stroke-width="1"/></svg>
<svg class="abs" style="left:18.5px;top:388.5px" width="10.0" height="10.0" viewBox="0 0 10 10"><path d="M2 3.4Q6.6 2.4 6.8 7" fill="none" stroke="#c9c9c9" stroke-width="1.3"/><path d="M0.8 1L4.6 1.6L1.6 5Z" fill="#c9c9c9"/><path d="M4.6 6L9 6L6.8 9.4Z" fill="#c9c9c9"/></svg>
<div class="abs" style="left:3.8px;top:403.7px;width:14.4px;height:14.0px;background:#ffffff;"></div>
<div class="abs" style="left:11.5px;top:411.5px;width:15.0px;height:15.0px;background:#0c0c0c;border:1.3px solid #f2f2f2;outline:1px solid #111"></div>
<div class="abs" style="left:15.2px;top:415.2px;width:7.6px;height:7.6px;background:#464646;border:1.2px solid #f2f2f2"></div>
<div class="abs" style="left:4.6px;top:432.3px;width:6.4px;height:6.4px;background:#3a3a3a;border:1.4px solid #111"></div>
<div class="abs" style="left:11.6px;top:432.3px;width:6.4px;height:6.4px;background:linear-gradient(90deg,#eee,#444)"></div>
<svg class="abs" style="left:18.4px;top:432.3px" width="6.6" height="6.6" viewBox="0 0 6.6 6.6"><rect width="6.6" height="6.6" fill="#fff"/><path d="M0 6.6L6.6 0" stroke="#e11" stroke-width="1.6"/></svg>
<svg class="abs" style="left:9.5px;top:444.5px" width="12.0" height="12.0" viewBox="0 0 12 12"><circle cx="4.6" cy="4.6" r="3.6" fill="none" stroke="#c9c9c9" stroke-width="1"/><rect x="4.6" y="4.6" width="6" height="6" rx="1" fill="#c9c9c9"/></svg>
<svg class="abs" style="left:7.0px;top:463.0px" width="16.0" height="14.0" viewBox="0 0 16 14"><rect x="4.4" y="1" width="10.6" height="7.6" fill="#5a5a5a" stroke="#c9c9c9" stroke-width="1.1"/><rect x="1" y="4" width="10.6" height="7.6" fill="#5a5a5a" stroke="#c9c9c9" stroke-width="1.1"/></svg>
<div class="abs" style="left:9.7px;top:494px;width:2.6px;height:2.6px;border-radius:2px;background:#d0d0d0"></div>
<div class="abs" style="left:13.3px;top:494px;width:2.6px;height:2.6px;border-radius:2px;background:#d0d0d0"></div>
<div class="abs" style="left:16.9px;top:494px;width:2.6px;height:2.6px;border-radius:2px;background:#d0d0d0"></div>
<div class="abs" style="left:1012.0px;top:67.0px;width:14.0px;height:2.0px;background:transparent;border-top:1px dotted #5c5c5c;border-bottom:1px dotted #5c5c5c;height:3px"></div>
<div class="abs" style="left:1012.0px;top:121.0px;width:14.0px;height:2.0px;background:transparent;border-top:1px dotted #5c5c5c;border-bottom:1px dotted #5c5c5c;height:3px"></div>
<svg class="abs" style="left:1010.0px;top:74.0px" width="18.0" height="16.0" viewBox="0 0 18 16"><path d="M9 2Q16.6 2 16.6 7.6Q16.6 10.4 13 10.2Q11 10 11.6 12Q12 14.2 8.6 14Q1.4 13.4 1.4 8Q1.4 2 9 2Z" fill="#d2d2d2"/><circle cx="5" cy="8.6" r="1.3" fill="#4a4a4a"/><circle cx="6.8" cy="5.2" r="1.3" fill="#4a4a4a"/><circle cx="10.6" cy="4.6" r="1.3" fill="#4a4a4a"/><circle cx="13.6" cy="6.8" r="1.2" fill="#4a4a4a"/><circle cx="8" cy="11.6" r="1.2" fill="#4a4a4a"/></svg>
<svg class="abs" style="left:1011px;top:97px" width="16" height="16"><defs><linearGradient id="cg" x1="0" y1="0" x2="1" y2="0"><stop offset="0" stop-color="#2a2a2a"/><stop offset="1" stop-color="#f0f0f0"/></linearGradient></defs><path d="M1.6 14.4V1.6Q13.6 2.6 14.4 14.4Z" fill="url(#cg)" stroke="#d0d0d0" stroke-width="1"/></svg>
<div class="abs" style="left:1036.0px;top:96.6px;width:102.0px;height:1.2px;background:#333333;"></div>
<div class="abs" style="left:1036.0px;top:173.6px;width:102.0px;height:1.2px;background:#333333;"></div>
<div class="abs" style="left:1036.0px;top:250.4px;width:102.0px;height:1.2px;background:#333333;"></div>
<div class="abs" style="left:1036.0px;top:304.2px;width:102.0px;height:1.2px;background:#333333;"></div>
<div class="abs" style="left:1080.0px;top:67.5px;width:14.0px;height:2.0px;background:transparent;border-top:1px dotted #5c5c5c;border-bottom:1px dotted #5c5c5c;height:3px"></div>
<div class="abs" style="left:1080.0px;top:100.0px;width:14.0px;height:2.0px;background:transparent;border-top:1px dotted #5c5c5c;border-bottom:1px dotted #5c5c5c;height:3px"></div>
<div class="abs" style="left:1080.0px;top:177.0px;width:14.0px;height:2.0px;background:transparent;border-top:1px dotted #5c5c5c;border-bottom:1px dotted #5c5c5c;height:3px"></div>
<div class="abs" style="left:1080.0px;top:254.0px;width:14.0px;height:2.0px;background:transparent;border-top:1px dotted #5c5c5c;border-bottom:1px dotted #5c5c5c;height:3px"></div>
<div class="abs" style="left:1040.5px;top:260.8px;width:95.0px;height:17.6px;background:#2c2c2c;border-radius:1px"></div>
<div class="t" style="left:1065.3px;top:79.0px;font-size:8.50px;color:#e6e6e6;font-weight:700;letter-spacing:.15px;">Actions</div>
<div class="t" style="left:1065.3px;top:111.2px;font-size:8.50px;color:#e6e6e6;font-weight:700;letter-spacing:.15px;">Links</div>
<div class="t" style="left:1065.3px;top:133.6px;font-size:8.50px;color:#e6e6e6;font-weight:700;letter-spacing:.15px;">Libraries</div>
<div class="t" style="left:1065.3px;top:155.8px;font-size:8.50px;color:#e6e6e6;font-weight:700;letter-spacing:.15px;">Document Info</div>
<div class="t" style="left:1065.3px;top:188.2px;font-size:8.50px;color:#e6e6e6;font-weight:700;letter-spacing:.15px;">Variables</div>
<div class="t" style="left:1065.3px;top:210.2px;font-size:8.50px;color:#e6e6e6;font-weight:700;letter-spacing:.15px;">Appearance</div>
<div class="t" style="left:1065.3px;top:232.6px;font-size:8.50px;color:#e6e6e6;font-weight:700;letter-spacing:.15px;">Asset Export</div>
<div class="t" style="left:1065.3px;top:264.8px;font-size:8.50px;color:#e6e6e6;font-weight:700;letter-spacing:.15px;">Layers</div>
<div class="t" style="left:1065.3px;top:286.8px;font-size:8.50px;color:#e6e6e6;font-weight:700;letter-spacing:.15px;">Artboards</div>
<svg class="abs" style="left:1044.0px;top:77.0px" width="14.0" height="14.0" viewBox="0 0 14 14"><path d="M2.6 2L12.4 7L2.6 12Z" fill="#d2d2d2"/></svg>
<svg class="abs" style="left:1043.0px;top:110.0px" width="17.0" height="12.0" viewBox="0 0 17 12"><rect x="1" y="3" width="9" height="6" rx="3" fill="none" stroke="#d2d2d2" stroke-width="1.5"/><rect x="7" y="3" width="9" height="6" rx="3" fill="none" stroke="#d2d2d2" stroke-width="1.5"/></svg>
<svg class="abs" style="left:1042.5px;top:131.0px" width="18.0" height="14.0" viewBox="0 0 18 14"><path d="M5 12.4Q1.2 12 1.4 8.6Q1.8 5.8 4.8 6Q6 1.8 10 2.2Q13.4 2.6 13.8 5.6Q17 6 16.8 9.2Q16.4 12.4 13 12.4Z" fill="#8a8a8a" stroke="#d2d2d2" stroke-width="1.2"/><path d="M4.4 10.6Q7 4.8 10.6 7.4Q13 9.4 15 7.6" fill="none" stroke="#d2d2d2" stroke-width="1.1"/></svg>
<svg class="abs" style="left:1044.5px;top:152.0px" width="14.0" height="17.0" viewBox="0 0 14 17"><path d="M1.4 1.2H8.8L12.6 5V15.8H1.4Z" fill="#8a8a8a" stroke="#d2d2d2" stroke-width="1.1"/><circle cx="7" cy="10.4" r="3.3" fill="#3c3c3c"/><rect x="6.4" y="9.8" width="1.3" height="2.8" fill="#d2d2d2"/><circle cx="7" cy="8.6" r=".8" fill="#d2d2d2"/></svg>
<svg class="abs" style="left:1042.5px;top:184.0px" width="18.0" height="18.0" viewBox="0 0 18 18"><circle cx="6.2" cy="11.2" r="2.728" fill="none" stroke="#d2d2d2" stroke-width="1.848"/><path d="M9.28 11.20L10.95 11.20" stroke="#d2d2d2" stroke-width="1.848"/><path d="M8.38 13.38L9.56 14.56" stroke="#d2d2d2" stroke-width="1.848"/><path d="M6.20 14.28L6.20 15.95" stroke="#d2d2d2" stroke-width="1.848"/><path d="M4.02 13.38L2.84 14.56" stroke="#d2d2d2" stroke-width="1.848"/><path d="M3.12 11.20L1.45 11.20" stroke="#d2d2d2" stroke-width="1.848"/><path d="M4.02 9.02L2.84 7.84" stroke="#d2d2d2" stroke-width="1.848"/><path d="M6.20 8.12L6.20 6.45" stroke="#d2d2d2" stroke-width="1.848"/><path d="M8.38 9.02L9.56 7.84" stroke="#d2d2d2" stroke-width="1.848"/><circle cx="13" cy="5.4" r="1.984" fill="none" stroke="#d2d2d2" stroke-width="1.344"/><path d="M15.24 5.40L16.46 5.40" stroke="#d2d2d2" stroke-width="1.344"/><path d="M14.58 6.98L15.44 7.84" stroke="#d2d2d2" stroke-width="1.344"/><path d="M13.00 7.64L13.00 8.86" stroke="#d2d2d2" stroke-width="1.344"/><path d="M11.42 6.98L10.56 7.84" stroke="#d2d2d2" stroke-width="1.344"/><path d="M10.76 5.40L9.54 5.40" stroke="#d2d2d2" stroke-width="1.344"/><path d="M11.42 3.82L10.56 2.96" stroke="#d2d2d2" stroke-width="1.344"/><path d="M13.00 3.16L13.00 1.94" stroke="#d2d2d2" stroke-width="1.344"/><path d="M14.58 3.82L15.44 2.96" stroke="#d2d2d2" stroke-width="1.344"/></svg>
<svg class="abs" style="left:1043.5px;top:207.5px" width="16.0" height="16.0" viewBox="0 0 16 16"><circle cx="8" cy="8" r="6.6" fill="none" stroke="#d2d2d2" stroke-width="1.2" stroke-dasharray="1.3 1.3"/><circle cx="8" cy="8" r="4.4" fill="#d2d2d2"/></svg>
<svg class="abs" style="left:1044.0px;top:230.0px" width="15.0" height="15.0" viewBox="0 0 15 15"><path d="M6.4 2.4H1.6V13.4H12.6V8.6" fill="none" stroke="#d2d2d2" stroke-width="1.4"/><path d="M8.6 1.4H13.6V6.4M13.4 1.6L6.6 8.4" fill="none" stroke="#d2d2d2" stroke-width="1.4"/></svg>
<svg class="abs" style="left:1043.0px;top:262.0px" width="16.0" height="15.0" viewBox="0 0 16 15"><path d="M8 1.4L14.6 5L8 8.6L1.4 5Z" fill="#ffffff"/><path d="M2.6 8L8 11L13.4 8L14.6 8.8L8 12.6L1.4 8.8Z" fill="#d2d2d2"/></svg>
<svg class="abs" style="left:1043.5px;top:284.5px" width="16.0" height="15.0" viewBox="0 0 16 15"><rect x="1" y="1" width="8.6" height="8.6" fill="none" stroke="#d2d2d2" stroke-width="1.2"/><rect x="5.6" y="5.4" width="9" height="8.6" fill="#4a4a4a" stroke="#d2d2d2" stroke-width="1.2"/></svg>
<div class="abs" style="left:1138.0px;top:55.0px;width:6.0px;height:593.0px;background:#383838;"></div>
</body></html>
